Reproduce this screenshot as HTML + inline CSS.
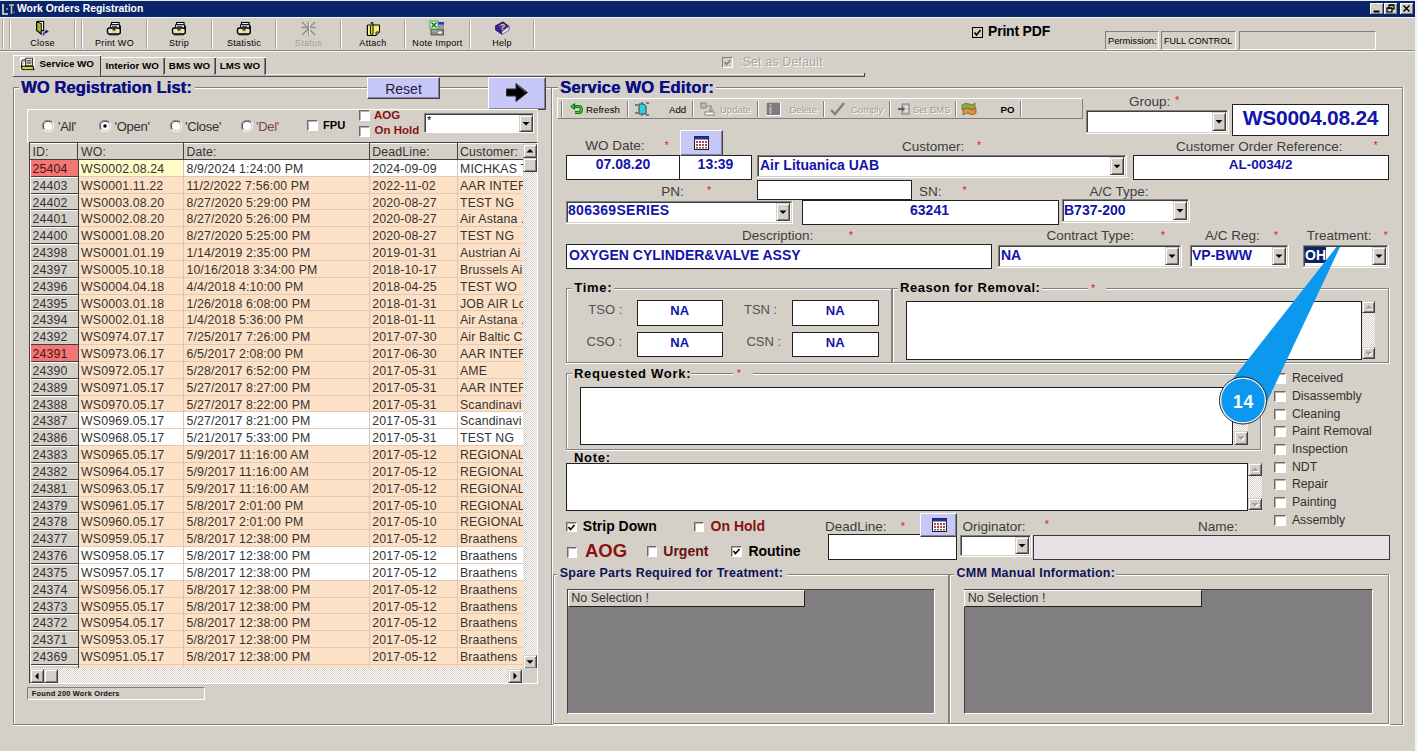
<!DOCTYPE html>
<html><head><meta charset="utf-8"><style>
html,body{margin:0;padding:0}
body{width:1417px;height:751px;overflow:hidden;position:relative;background:#d4d0c8;font-family:"Liberation Sans",sans-serif}
body div{position:absolute}
.t{white-space:nowrap}
</style></head><body>
<div style="left:0px;top:0px;width:1417px;height:1px;background:#e8e8f0"></div>
<div style="left:0px;top:1px;width:1415px;height:16px;background:#0a246a"></div>
<div style="left:1415px;top:0px;width:2px;height:751px;background:#eef0fa"></div>
<svg style="position:absolute;left:1px;top:2px" width="14" height="14" viewBox="0 0 14 14"><path d="M2 2v10h5" stroke="#e8e8d0" stroke-width="1.6" fill="none"/><path d="M8 3h5M10.5 3v9" stroke="#c8c890" stroke-width="1.6" fill="none"/><circle cx="6" cy="7" r="0.8" fill="#fff"/><circle cx="13" cy="10" r="0.6" fill="#fff"/></svg>
<div class="t" style="left:17px;top:3.90px;font-size:10.4px;line-height:10.4px;color:#fff;font-weight:bold;">Work Orders Registration</div>
<div style="left:1370px;top:3px;width:13px;height:11px;background:#d4d0c8;border-top:1px solid #fff;border-left:1px solid #fff;box-shadow:inset -1px -1px #808080;box-sizing:border-box"></div>
<div style="left:1384px;top:3px;width:13px;height:11px;background:#d4d0c8;border-top:1px solid #fff;border-left:1px solid #fff;box-shadow:inset -1px -1px #808080;box-sizing:border-box"></div>
<div style="left:1400px;top:3px;width:13px;height:11px;background:#d4d0c8;border-top:1px solid #fff;border-left:1px solid #fff;box-shadow:inset -1px -1px #808080;box-sizing:border-box"></div>
<svg style="position:absolute;left:1370px;top:3px" width="13" height="11"><rect x="3.5" y="7.5" width="6" height="2" fill="#000"/></svg>
<svg style="position:absolute;left:1384px;top:3px" width="13" height="11"><rect x="5" y="2" width="5" height="4" fill="none" stroke="#000" stroke-width="1.2"/><rect x="3" y="5" width="5" height="4" fill="#d4d0c8" stroke="#000" stroke-width="1.2"/><rect x="5" y="1.6" width="5" height="1.2" fill="#000"/><rect x="3" y="4.6" width="5" height="1.2" fill="#000"/></svg>
<svg style="position:absolute;left:1400px;top:3px" width="13" height="11"><path d="M3.5 2.5L9.5 8.5M9.5 2.5L3.5 8.5" stroke="#000" stroke-width="1.5"/></svg>
<div style="left:0px;top:17px;width:1415px;height:1px;background:#f4f4f4"></div>
<div style="left:0px;top:50px;width:1415px;height:1px;background:#8a8782"></div>
<div style="left:0px;top:51px;width:1415px;height:1px;background:#f0f0f0"></div>
<div style="left:2px;top:20px;width:1px;height:29px;background:#a8a49c"></div>
<div style="left:3px;top:20px;width:1px;height:29px;background:#fff"></div>
<div style="left:9px;top:20px;width:1px;height:29px;background:#a8a49c"></div>
<div style="left:10px;top:20px;width:1px;height:29px;background:#fff"></div>
<div style="left:74px;top:20px;width:1px;height:29px;background:#a8a49c"></div>
<div style="left:75px;top:20px;width:1px;height:29px;background:#fff"></div>
<div style="left:81px;top:20px;width:1px;height:29px;background:#a8a49c"></div>
<div style="left:82px;top:20px;width:1px;height:29px;background:#fff"></div>
<div style="left:146px;top:20px;width:1px;height:29px;background:#a8a49c"></div>
<div style="left:147px;top:20px;width:1px;height:29px;background:#fff"></div>
<div style="left:211px;top:20px;width:1px;height:29px;background:#a8a49c"></div>
<div style="left:212px;top:20px;width:1px;height:29px;background:#fff"></div>
<div style="left:275px;top:20px;width:1px;height:29px;background:#a8a49c"></div>
<div style="left:276px;top:20px;width:1px;height:29px;background:#fff"></div>
<div style="left:340px;top:20px;width:1px;height:29px;background:#a8a49c"></div>
<div style="left:341px;top:20px;width:1px;height:29px;background:#fff"></div>
<div style="left:404px;top:20px;width:1px;height:29px;background:#a8a49c"></div>
<div style="left:405px;top:20px;width:1px;height:29px;background:#fff"></div>
<div style="left:469px;top:20px;width:1px;height:29px;background:#a8a49c"></div>
<div style="left:470px;top:20px;width:1px;height:29px;background:#fff"></div>
<div style="left:533px;top:20px;width:1px;height:29px;background:#a8a49c"></div>
<div style="left:534px;top:20px;width:1px;height:29px;background:#fff"></div>
<div class="t" style="left:-257.5px;width:600px;text-align:center;top:38.58px;font-size:9px;line-height:9px;color:#000;letter-spacing:0.3px">Close</div>
<div class="t" style="left:-185.5px;width:600px;text-align:center;top:38.58px;font-size:9px;line-height:9px;color:#000;letter-spacing:0.3px">Print WO</div>
<div class="t" style="left:-121px;width:600px;text-align:center;top:38.58px;font-size:9px;line-height:9px;color:#000;letter-spacing:0.3px">Strip</div>
<div class="t" style="left:-56px;width:600px;text-align:center;top:38.58px;font-size:9px;line-height:9px;color:#000;letter-spacing:0.3px">Statistic</div>
<div class="t" style="left:8.5px;width:600px;text-align:center;top:38.58px;font-size:9px;line-height:9px;color:#a09c94;letter-spacing:0.3px">Status</div>
<div class="t" style="left:73px;width:600px;text-align:center;top:38.58px;font-size:9px;line-height:9px;color:#000;letter-spacing:0.3px">Attach</div>
<div class="t" style="left:137.5px;width:600px;text-align:center;top:38.58px;font-size:9px;line-height:9px;color:#000;letter-spacing:0.3px">Note Import</div>
<div class="t" style="left:202px;width:600px;text-align:center;top:38.58px;font-size:9px;line-height:9px;color:#000;letter-spacing:0.3px">Help</div>
<svg style="position:absolute;left:106.0px;top:21px" width="16" height="15" viewBox="0 0 16 15"><rect x="2.8" y="12.6" width="10" height="2" fill="#707070"/><rect x="12.6" y="4.5" width="2.3" height="7.5" fill="#000"/><rect x="5.5" y="1.5" width="7.5" height="2.2" fill="#fff" stroke="#000" stroke-width="1.1"/><rect x="4.5" y="3.8" width="9" height="3.5" fill="#f0f0f0" stroke="#000" stroke-width="0.9"/><line x1="6" y1="5.5" x2="11" y2="5.5" stroke="#404040" stroke-width="0.9"/><rect x="1.5" y="7" width="12.8" height="6" rx="2" fill="#e6e6de" stroke="#000" stroke-width="1.4"/><rect x="6.6" y="9.4" width="3.8" height="2.4" fill="#d8ec30"/><rect x="6.5" y="8.2" width="3" height="1.2" fill="#000"/></svg>
<svg style="position:absolute;left:170.5px;top:21px" width="16" height="15" viewBox="0 0 16 15"><rect x="2.8" y="12.6" width="10" height="2" fill="#707070"/><rect x="12.6" y="4.5" width="2.3" height="7.5" fill="#000"/><rect x="5.5" y="1.5" width="7.5" height="2.2" fill="#fff" stroke="#000" stroke-width="1.1"/><rect x="4.5" y="3.8" width="9" height="3.5" fill="#f0f0f0" stroke="#000" stroke-width="0.9"/><line x1="6" y1="5.5" x2="11" y2="5.5" stroke="#404040" stroke-width="0.9"/><rect x="1.5" y="7" width="12.8" height="6" rx="2" fill="#e6e6de" stroke="#000" stroke-width="1.4"/><rect x="6.6" y="9.4" width="3.8" height="2.4" fill="#d8ec30"/><rect x="6.5" y="8.2" width="3" height="1.2" fill="#000"/></svg>
<svg style="position:absolute;left:235.5px;top:21px" width="16" height="15" viewBox="0 0 16 15"><rect x="2.8" y="12.6" width="10" height="2" fill="#707070"/><rect x="12.6" y="4.5" width="2.3" height="7.5" fill="#000"/><rect x="5.5" y="1.5" width="7.5" height="2.2" fill="#fff" stroke="#000" stroke-width="1.1"/><rect x="4.5" y="3.8" width="9" height="3.5" fill="#f0f0f0" stroke="#000" stroke-width="0.9"/><line x1="6" y1="5.5" x2="11" y2="5.5" stroke="#404040" stroke-width="0.9"/><rect x="1.5" y="7" width="12.8" height="6" rx="2" fill="#e6e6de" stroke="#000" stroke-width="1.4"/><rect x="6.6" y="9.4" width="3.8" height="2.4" fill="#d8ec30"/><rect x="6.5" y="8.2" width="3" height="1.2" fill="#000"/></svg>
<svg style="position:absolute;left:35px;top:20px" width="15" height="17" viewBox="0 0 15 17"><rect x="2.6" y="1.4" width="6" height="9.2" fill="#fff" stroke="#000" stroke-width="1.1"/><path d="M1.6 2 L6.2 3.6 V14.2 L1.6 10.4 Z" fill="#a0a820" stroke="#000" stroke-width="1.1"/><path d="M2.6 3.5 L5 4.4 V11" stroke="#d0d060" stroke-width="0.8" fill="none"/><path d="M8.4 15.4 Q8.8 12 11.6 11.6" stroke="#3838a8" stroke-width="1.6" fill="none"/><path d="M10.6 9.4 L13.8 11.4 L10.6 13.4 Z" fill="#18186a"/></svg>
<svg style="position:absolute;left:300px;top:20px" width="17" height="17" viewBox="0 0 17 17"><g stroke="#8c8a84" stroke-width="1.3"><line x1="8.5" y1="1.5" x2="8.5" y2="15.5"/><line x1="2" y1="2" x2="15" y2="15"/><line x1="15" y1="2" x2="2" y2="15"/><line x1="1" y1="7.5" x2="16" y2="7.5"/></g><line x1="9.6" y1="2" x2="9.6" y2="15" stroke="#fff" stroke-width="0.8"/></svg>
<svg style="position:absolute;left:365px;top:21px" width="16" height="16" viewBox="0 0 16 16"><rect x="1.5" y="4" width="2.5" height="10.5" fill="#707058"/><path d="M2.5 4 H14.5 V10.5 L11 14.5 H2.5 Z" fill="#f4f070" stroke="#000" stroke-width="1"/><path d="M11 14.5 V11 H14.5 Z" fill="#c8c850" stroke="#000" stroke-width="0.8"/><path d="M6 3 Q6 1.2 7 1.2 Q8 1.2 8 3 V12 Q8 14 6.8 14 Q5.6 14 5.6 12 V5" stroke="#000" stroke-width="1" fill="none"/></svg>
<svg style="position:absolute;left:429px;top:20px" width="17" height="16" viewBox="0 0 17 16"><rect x="2" y="9" width="12.5" height="6" fill="#8c8c8c" stroke="#505050" stroke-width="0.9"/><rect x="3.5" y="10.5" width="4" height="1" fill="#c0c0c0"/><rect x="9" y="11.5" width="4" height="2" rx="1" fill="#fff"/><rect x="9" y="3" width="6" height="6" fill="#9c9c9c"/><rect x="9" y="2" width="6" height="2.5" fill="#2040d0"/><rect x="1" y="1" width="8" height="8" fill="#f0f8f0" stroke="#40a040" stroke-width="1"/><path d="M2.5 2.5 L7.5 7.5 M7.5 2.5 L2.5 7.5" stroke="#108010" stroke-width="1.6"/></svg>
<svg style="position:absolute;left:494px;top:21px" width="16" height="15" viewBox="0 0 16 15"><path d="M1.5 5 L9 1 L15 5.5 L15 9 L8 13.5 L1.5 9 Z" fill="#fff" stroke="#20105a" stroke-width="0.8"/><path d="M1.5 5 L9 1 L15 5.5 L8 10.5 Z" fill="#4a28b0" stroke="#20105a" stroke-width="1"/><path d="M1.5 5 L8 10.5 V13.5 L1.5 9 Z" fill="#3a1890"/><path d="M8 10.5 L15 5.5 V9 L8 13.5 Z" fill="#e8e8f0" stroke="#606080" stroke-width="0.5"/><text x="8.5" y="8.6" font-family="Liberation Sans" font-weight="bold" font-size="9" fill="#f8e010" text-anchor="middle">?</text></svg>
<div style="left:972px;top:27px;width:11px;height:11px;border:1.5px solid #000;box-sizing:border-box;background:#d4d0c8"></div>
<svg style="position:absolute;left:972px;top:27px" width="11" height="11"><path d="M2.5 5.5 L4.5 8 L8.5 3" stroke="#000" stroke-width="1.6" fill="none"/></svg>
<div class="t" style="left:988px;top:24.15px;font-size:14px;line-height:14px;color:#000;font-weight:bold;letter-spacing:-0.2px">Print PDF</div>
<div style="left:1105px;top:31px;width:54px;height:19px;border-top:1px solid #808080;border-left:1px solid #808080;border-right:1px solid #fff;border-bottom:1px solid #fff;box-sizing:border-box"></div>
<div style="left:1161px;top:31px;width:75px;height:19px;border-top:1px solid #808080;border-left:1px solid #808080;border-right:1px solid #fff;border-bottom:1px solid #fff;box-sizing:border-box"></div>
<div style="left:1239px;top:31px;width:137px;height:19px;border-top:1px solid #808080;border-left:1px solid #808080;border-right:1px solid #fff;border-bottom:1px solid #fff;box-sizing:border-box"></div>
<div class="t" style="left:1108px;top:36.93px;font-size:9.3px;line-height:9.3px;color:#000;">Permission:</div>
<div class="t" style="left:1164px;top:37.18px;font-size:9px;line-height:9px;color:#000;">FULL CONTROL</div>
<div style="left:13px;top:74px;width:852px;height:1px;background:#f0f0f0"></div>
<div style="left:13px;top:75px;width:852px;height:1px;background:#b8b6b0"></div>
<div style="left:13px;top:76px;width:852px;height:1px;background:#505050"></div>
<div style="left:864px;top:73px;width:1px;height:4px;background:#404040"></div>
<div style="left:13px;top:55px;width:88px;height:21px;border-top:1px solid #fff;border-left:1px solid #fff;box-shadow:inset -1px 0 #808080;box-sizing:border-box;background:#d4d0c8"></div>
<div style="left:100px;top:56px;width:1px;height:20px;background:#404040"></div>
<div style="left:102px;top:57px;width:62.5px;height:18px;border-top:1px solid #fff;box-sizing:border-box;background:#d4d0c8"></div>
<div style="left:163.5px;top:58px;width:1px;height:16px;background:#404040"></div>
<div style="left:162.5px;top:58px;width:1px;height:17px;background:#808080"></div>
<div class="t" style="left:-167.75px;width:600px;text-align:center;top:60.70px;font-size:9.8px;line-height:9.8px;color:#000;font-weight:bold;">Interior WO</div>
<div style="left:165.5px;top:57px;width:50.0px;height:18px;border-top:1px solid #fff;box-sizing:border-box;background:#d4d0c8"></div>
<div style="left:214.5px;top:58px;width:1px;height:16px;background:#404040"></div>
<div style="left:213.5px;top:58px;width:1px;height:17px;background:#808080"></div>
<div class="t" style="left:-110.5px;width:600px;text-align:center;top:60.70px;font-size:9.8px;line-height:9.8px;color:#000;font-weight:bold;">BMS WO</div>
<div style="left:216.5px;top:57px;width:49.0px;height:18px;border-top:1px solid #fff;box-sizing:border-box;background:#d4d0c8"></div>
<div style="left:264.5px;top:58px;width:1px;height:16px;background:#404040"></div>
<div style="left:263.5px;top:58px;width:1px;height:17px;background:#808080"></div>
<div class="t" style="left:-60.0px;width:600px;text-align:center;top:60.70px;font-size:9.8px;line-height:9.8px;color:#000;font-weight:bold;">LMS WO</div>
<div class="t" style="left:39.5px;top:58.90px;font-size:9.8px;line-height:9.8px;color:#000;font-weight:bold;">Service WO</div>
<svg style="position:absolute;left:20px;top:57px" width="15" height="14" viewBox="0 0 15 14"><rect x="0" y="0" width="14.7" height="14" fill="#fcfcf4"/><path d="M1.6 10 V4.6 Q1.6 2.9 3.2 2.9 H6" stroke="#202020" stroke-width="1" fill="#c8ccb0"/><rect x="5.6" y="1.2" width="7" height="7.6" fill="#e0e4d8" stroke="#202020" stroke-width="0.9"/><line x1="6.6" y1="3.9" x2="11.4" y2="3.9" stroke="#181838" stroke-width="1"/><line x1="6.6" y1="6" x2="11.4" y2="6" stroke="#181838" stroke-width="1"/><path d="M1.2 9.2 H13 L14 12.8 H2.2 Z" fill="#c8dc30" stroke="#000" stroke-width="1.1"/></svg>
<div style="left:722px;top:57px;width:11px;height:11px;border-top:1px solid #808080;border-left:1px solid #808080;border-right:1px solid #fff;border-bottom:1px solid #fff;box-sizing:border-box;background:#d4d0c8"></div>
<svg style="position:absolute;left:722px;top:57px" width="11" height="11"><path d="M2.5 5 L4.5 7.5 L8.5 3" stroke="#808080" stroke-width="1.6" fill="none"/></svg>
<div class="t" style="left:739px;top:56.34px;font-size:12px;line-height:12px;color:#a8a49c;text-shadow:1px 1px #fff;letter-spacing:0.35px">:Set as Default</div>
<div style="left:13px;top:87px;width:540px;height:1px;background:#808080"></div>
<div style="left:14px;top:88px;width:539px;height:1px;background:#fff"></div>
<div style="left:13px;top:87px;width:1px;height:638px;background:#808080"></div>
<div style="left:14px;top:88px;width:1px;height:636px;background:#fff"></div>
<div style="left:13px;top:724px;width:540px;height:1px;background:#808080"></div>
<div style="left:13px;top:725px;width:540px;height:1px;background:#fff"></div>
<div style="left:19px;top:78px;width:176px;height:18px;background:#d4d0c8"></div>
<div class="t" style="left:21px;top:79.03px;font-size:16.5px;line-height:16.5px;color:#0c0e86;font-weight:bold;letter-spacing:0.1px;text-shadow:0.4px 0 0 #0c0e86">WO Registration List:</div>
<div style="left:367px;top:77px;width:73px;height:22px;background:#c8c8f8;border-top:1px solid #fff;border-left:1px solid #fff;border-right:1px solid #404040;border-bottom:1px solid #404040;box-sizing:border-box;box-shadow:inset -1px -1px #8080a0"></div>
<div class="t" style="left:103.5px;width:600px;text-align:center;top:81.75px;font-size:14px;line-height:14px;color:#20203a;">Reset</div>
<div style="left:488px;top:77px;width:58px;height:33px;background:#c8c8f8;border-top:1px solid #fff;border-left:1px solid #fff;border-right:1px solid #404040;border-bottom:1px solid #404040;box-sizing:border-box;box-shadow:inset -1px -1px #8080a0"></div>
<svg style="position:absolute;left:505px;top:82px" width="24" height="21" viewBox="0 0 24 21"><path d="M1.5 7 H11 V1.5 L22.5 10.5 L11 19.5 V14 H1.5 Z" fill="#000" stroke="#303030" stroke-width="1"/><path d="M12 3 L21 10.5" stroke="#606060" stroke-width="1"/></svg>
<div style="left:27px;top:109px;width:511px;height:34px;border-top:1px solid #fff;border-left:1px solid #fff;border-right:1px solid #f4f4f4;box-sizing:border-box"></div>
<svg style="position:absolute;left:42px;top:120px" width="12" height="12" viewBox="0 0 12 12"><path d="M10.5 2.2 A5.5 5.5 0 0 0 1.5 9.8" stroke="#808080" fill="none"/><path d="M9.6 3 A4.5 4.5 0 0 0 2.4 9" stroke="#404040" fill="none"/><path d="M1.5 9.8 A5.5 5.5 0 0 0 10.5 2.2" stroke="#fff" fill="none"/><circle cx="6" cy="6" r="4" fill="#fff"/></svg>
<div class="t" style="left:58px;top:119.80px;font-size:13px;line-height:13px;color:#303030;letter-spacing:-0.3px">&#x27;All&#x27;</div>
<svg style="position:absolute;left:99px;top:120px" width="12" height="12" viewBox="0 0 12 12"><path d="M10.5 2.2 A5.5 5.5 0 0 0 1.5 9.8" stroke="#808080" fill="none"/><path d="M9.6 3 A4.5 4.5 0 0 0 2.4 9" stroke="#404040" fill="none"/><path d="M1.5 9.8 A5.5 5.5 0 0 0 10.5 2.2" stroke="#fff" fill="none"/><circle cx="6" cy="6" r="4" fill="#fff"/><circle cx='6' cy='6' r='1.8' fill='#000'/></svg>
<div class="t" style="left:114.6px;top:119.80px;font-size:13px;line-height:13px;color:#303030;letter-spacing:-0.3px">&#x27;Open&#x27;</div>
<svg style="position:absolute;left:169.5px;top:120px" width="12" height="12" viewBox="0 0 12 12"><path d="M10.5 2.2 A5.5 5.5 0 0 0 1.5 9.8" stroke="#808080" fill="none"/><path d="M9.6 3 A4.5 4.5 0 0 0 2.4 9" stroke="#404040" fill="none"/><path d="M1.5 9.8 A5.5 5.5 0 0 0 10.5 2.2" stroke="#fff" fill="none"/><circle cx="6" cy="6" r="4" fill="#fff"/></svg>
<div class="t" style="left:185px;top:119.80px;font-size:13px;line-height:13px;color:#303030;letter-spacing:-0.3px">&#x27;Close&#x27;</div>
<svg style="position:absolute;left:240.5px;top:120px" width="12" height="12" viewBox="0 0 12 12"><path d="M10.5 2.2 A5.5 5.5 0 0 0 1.5 9.8" stroke="#808080" fill="none"/><path d="M9.6 3 A4.5 4.5 0 0 0 2.4 9" stroke="#404040" fill="none"/><path d="M1.5 9.8 A5.5 5.5 0 0 0 10.5 2.2" stroke="#fff" fill="none"/><circle cx="6" cy="6" r="4" fill="#fff"/></svg>
<div class="t" style="left:256px;top:119.80px;font-size:13px;line-height:13px;color:#804848;letter-spacing:-0.3px">&#x27;Del&#x27;</div>
<div style="left:307px;top:120px;width:11px;height:11px;background:#fff;border-top:1px solid #6a6a6a;border-left:1px solid #6a6a6a;border-right:1px solid #fff;border-bottom:1px solid #fff;box-sizing:border-box;box-shadow:inset 1px 1px #b8b4ac"></div>
<div class="t" style="left:323px;top:120.02px;font-size:11.2px;line-height:11.2px;color:#000;font-weight:bold;">FPU</div>
<div style="left:358.5px;top:109.5px;width:11px;height:11px;background:#fff;border-top:1px solid #6a6a6a;border-left:1px solid #6a6a6a;border-right:1px solid #fff;border-bottom:1px solid #fff;box-sizing:border-box;box-shadow:inset 1px 1px #b8b4ac"></div>
<div class="t" style="left:374px;top:109.67px;font-size:11.5px;line-height:11.5px;color:#8b1010;font-weight:bold;">AOG</div>
<div style="left:358.5px;top:126px;width:11px;height:11px;background:#fff;border-top:1px solid #6a6a6a;border-left:1px solid #6a6a6a;border-right:1px solid #fff;border-bottom:1px solid #fff;box-sizing:border-box;box-shadow:inset 1px 1px #b8b4ac"></div>
<div class="t" style="left:374.5px;top:125.37px;font-size:11.5px;line-height:11.5px;color:#8b1010;font-weight:bold;">On Hold</div>
<div style="left:424px;top:113px;width:110px;height:20px;background:#fff;border-top:1px solid #808080;border-left:1px solid #808080;border-right:1px solid #fff;border-bottom:1px solid #fff;box-sizing:border-box;box-shadow:inset 1px 1px #404040"></div>
<div class="t" style="left:427px;top:114.69px;font-size:11px;line-height:11px;color:#000;">*</div>
<div style="left:519px;top:115px;width:14px;height:17px;background:#d4d0c8;border-top:1px solid #d4d0c8;border-left:1px solid #d4d0c8;border-right:1px solid #404040;border-bottom:1px solid #404040;box-sizing:border-box;box-shadow:inset 1px 1px #fff,inset -1px -1px #808080"></div>
<svg style="position:absolute;left:519px;top:115px" width="14" height="17"><path d="M3.5 7.0 H10.5 L7.0 10.5 Z" fill="#000"/></svg>
<div style="left:29px;top:142px;width:509px;height:542px;border-top:1px solid #404040;border-left:1px solid #404040;border-right:1px solid #fff;border-bottom:1px solid #fff;box-sizing:border-box"></div>
<div style="left:30px;top:143px;width:492.5px;height:17px;background:#d4d0c8"></div>
<div style="left:30px;top:159px;width:492.5px;height:1px;background:#404040"></div>
<div style="left:30px;top:143px;width:492.5px;height:1px;background:#fff"></div>
<div style="left:77px;top:143px;width:1px;height:16px;background:#404040"></div>
<div class="t" style="left:32.5px;top:145.79px;font-size:12.3px;line-height:12.3px;color:#333;letter-spacing:0.15px">ID:</div>
<div style="left:182.7px;top:143px;width:1px;height:16px;background:#404040"></div>
<div class="t" style="left:81.1px;top:145.79px;font-size:12.3px;line-height:12.3px;color:#333;letter-spacing:0.15px">WO:</div>
<div style="left:368.7px;top:143px;width:1px;height:16px;background:#404040"></div>
<div class="t" style="left:186.4px;top:145.79px;font-size:12.3px;line-height:12.3px;color:#333;letter-spacing:0.15px">Date:</div>
<div style="left:457px;top:143px;width:1px;height:16px;background:#404040"></div>
<div class="t" style="left:372.3px;top:145.79px;font-size:12.3px;line-height:12.3px;color:#333;letter-spacing:0.15px">DeadLine:</div>
<div class="t" style="left:460.0px;top:145.79px;font-size:12.3px;line-height:12.3px;color:#333;letter-spacing:0.15px">Customer:</div>
<div style="left:30px;top:160px;width:492.5px;height:508px;overflow:hidden">
<div style="left:0;top:0.00px;width:493px;height:17.33px;background:#fff"></div>
<div style="left:0;top:0.00px;width:48px;height:17.33px;background:#f47676"></div>
<div style="left:0;top:15.83px;width:48px;height:1px;background:#404040"></div>
<div style="left:48px;top:0;width:105.7px;height:16.83px;background:#fefcc8"></div>
<div style="left:48px;top:15.83px;width:445px;height:1px;background:#e2cab6"></div>
<div class="t" style="left:2.5000000000000036px;top:2.99px;font-size:12.3px;line-height:12.3px;color:#4a1414;letter-spacing:0.15px">25404</div>
<div class="t" style="left:51.099999999999994px;top:2.99px;font-size:12.3px;line-height:12.3px;color:#333;letter-spacing:0.15px">WS0002.08.24</div>
<div class="t" style="left:156.4px;top:2.99px;font-size:12.3px;line-height:12.3px;color:#333;letter-spacing:0.15px">8/9/2024 1:24:00 PM</div>
<div class="t" style="left:342.3px;top:2.99px;font-size:12.3px;line-height:12.3px;color:#333;letter-spacing:0.15px">2024-09-09</div>
<div class="t" style="left:430.0px;top:2.99px;font-size:12.3px;line-height:12.3px;color:#333;letter-spacing:0.15px">MICHKAS T</div>
<div style="left:0;top:16.83px;width:493px;height:17.33px;background:#fde1c6"></div>
<div style="left:0;top:16.83px;width:48px;height:17.33px;background:#d4d0c8"></div>
<div style="left:0;top:32.66px;width:48px;height:1px;background:#404040"></div>
<div style="left:1px;top:16.83px;width:47px;height:1px;background:#fff"></div>
<div style="left:48px;top:32.66px;width:445px;height:1px;background:#e2cab6"></div>
<div class="t" style="left:2.5000000000000036px;top:19.82px;font-size:12.3px;line-height:12.3px;color:#333;letter-spacing:0.15px">24403</div>
<div class="t" style="left:51.099999999999994px;top:19.82px;font-size:12.3px;line-height:12.3px;color:#333;letter-spacing:0.15px">WS0001.11.22</div>
<div class="t" style="left:156.4px;top:19.82px;font-size:12.3px;line-height:12.3px;color:#333;letter-spacing:0.15px">11/2/2022 7:56:00 PM</div>
<div class="t" style="left:342.3px;top:19.82px;font-size:12.3px;line-height:12.3px;color:#333;letter-spacing:0.15px">2022-11-02</div>
<div class="t" style="left:430.0px;top:19.82px;font-size:12.3px;line-height:12.3px;color:#333;letter-spacing:0.15px">AAR INTER</div>
<div style="left:0;top:33.66px;width:493px;height:17.33px;background:#fde1c6"></div>
<div style="left:0;top:33.66px;width:48px;height:17.33px;background:#d4d0c8"></div>
<div style="left:0;top:49.49px;width:48px;height:1px;background:#404040"></div>
<div style="left:1px;top:33.66px;width:47px;height:1px;background:#fff"></div>
<div style="left:48px;top:49.49px;width:445px;height:1px;background:#e2cab6"></div>
<div class="t" style="left:2.5000000000000036px;top:36.65px;font-size:12.3px;line-height:12.3px;color:#333;letter-spacing:0.15px">24402</div>
<div class="t" style="left:51.099999999999994px;top:36.65px;font-size:12.3px;line-height:12.3px;color:#333;letter-spacing:0.15px">WS0003.08.20</div>
<div class="t" style="left:156.4px;top:36.65px;font-size:12.3px;line-height:12.3px;color:#333;letter-spacing:0.15px">8/27/2020 5:29:00 PM</div>
<div class="t" style="left:342.3px;top:36.65px;font-size:12.3px;line-height:12.3px;color:#333;letter-spacing:0.15px">2020-08-27</div>
<div class="t" style="left:430.0px;top:36.65px;font-size:12.3px;line-height:12.3px;color:#333;letter-spacing:0.15px">TEST NG</div>
<div style="left:0;top:50.49px;width:493px;height:17.33px;background:#fde1c6"></div>
<div style="left:0;top:50.49px;width:48px;height:17.33px;background:#d4d0c8"></div>
<div style="left:0;top:66.32px;width:48px;height:1px;background:#404040"></div>
<div style="left:1px;top:50.49px;width:47px;height:1px;background:#fff"></div>
<div style="left:48px;top:66.32px;width:445px;height:1px;background:#e2cab6"></div>
<div class="t" style="left:2.5000000000000036px;top:53.48px;font-size:12.3px;line-height:12.3px;color:#333;letter-spacing:0.15px">24401</div>
<div class="t" style="left:51.099999999999994px;top:53.48px;font-size:12.3px;line-height:12.3px;color:#333;letter-spacing:0.15px">WS0002.08.20</div>
<div class="t" style="left:156.4px;top:53.48px;font-size:12.3px;line-height:12.3px;color:#333;letter-spacing:0.15px">8/27/2020 5:26:00 PM</div>
<div class="t" style="left:342.3px;top:53.48px;font-size:12.3px;line-height:12.3px;color:#333;letter-spacing:0.15px">2020-08-27</div>
<div class="t" style="left:430.0px;top:53.48px;font-size:12.3px;line-height:12.3px;color:#333;letter-spacing:0.15px">Air Astana .</div>
<div style="left:0;top:67.32px;width:493px;height:17.33px;background:#fde1c6"></div>
<div style="left:0;top:67.32px;width:48px;height:17.33px;background:#d4d0c8"></div>
<div style="left:0;top:83.15px;width:48px;height:1px;background:#404040"></div>
<div style="left:1px;top:67.32px;width:47px;height:1px;background:#fff"></div>
<div style="left:48px;top:83.15px;width:445px;height:1px;background:#e2cab6"></div>
<div class="t" style="left:2.5000000000000036px;top:70.31px;font-size:12.3px;line-height:12.3px;color:#333;letter-spacing:0.15px">24400</div>
<div class="t" style="left:51.099999999999994px;top:70.31px;font-size:12.3px;line-height:12.3px;color:#333;letter-spacing:0.15px">WS0001.08.20</div>
<div class="t" style="left:156.4px;top:70.31px;font-size:12.3px;line-height:12.3px;color:#333;letter-spacing:0.15px">8/27/2020 5:25:00 PM</div>
<div class="t" style="left:342.3px;top:70.31px;font-size:12.3px;line-height:12.3px;color:#333;letter-spacing:0.15px">2020-08-27</div>
<div class="t" style="left:430.0px;top:70.31px;font-size:12.3px;line-height:12.3px;color:#333;letter-spacing:0.15px">TEST NG</div>
<div style="left:0;top:84.15px;width:493px;height:17.33px;background:#fde1c6"></div>
<div style="left:0;top:84.15px;width:48px;height:17.33px;background:#d4d0c8"></div>
<div style="left:0;top:99.98px;width:48px;height:1px;background:#404040"></div>
<div style="left:1px;top:84.15px;width:47px;height:1px;background:#fff"></div>
<div style="left:48px;top:99.98px;width:445px;height:1px;background:#e2cab6"></div>
<div class="t" style="left:2.5000000000000036px;top:87.14px;font-size:12.3px;line-height:12.3px;color:#333;letter-spacing:0.15px">24398</div>
<div class="t" style="left:51.099999999999994px;top:87.14px;font-size:12.3px;line-height:12.3px;color:#333;letter-spacing:0.15px">WS0001.01.19</div>
<div class="t" style="left:156.4px;top:87.14px;font-size:12.3px;line-height:12.3px;color:#333;letter-spacing:0.15px">1/14/2019 2:35:00 PM</div>
<div class="t" style="left:342.3px;top:87.14px;font-size:12.3px;line-height:12.3px;color:#333;letter-spacing:0.15px">2019-01-31</div>
<div class="t" style="left:430.0px;top:87.14px;font-size:12.3px;line-height:12.3px;color:#333;letter-spacing:0.15px">Austrian Ai</div>
<div style="left:0;top:100.98px;width:493px;height:17.33px;background:#fde1c6"></div>
<div style="left:0;top:100.98px;width:48px;height:17.33px;background:#d4d0c8"></div>
<div style="left:0;top:116.81px;width:48px;height:1px;background:#404040"></div>
<div style="left:1px;top:100.98px;width:47px;height:1px;background:#fff"></div>
<div style="left:48px;top:116.81px;width:445px;height:1px;background:#e2cab6"></div>
<div class="t" style="left:2.5000000000000036px;top:103.97px;font-size:12.3px;line-height:12.3px;color:#333;letter-spacing:0.15px">24397</div>
<div class="t" style="left:51.099999999999994px;top:103.97px;font-size:12.3px;line-height:12.3px;color:#333;letter-spacing:0.15px">WS0005.10.18</div>
<div class="t" style="left:156.4px;top:103.97px;font-size:12.3px;line-height:12.3px;color:#333;letter-spacing:0.15px">10/16/2018 3:34:00 PM</div>
<div class="t" style="left:342.3px;top:103.97px;font-size:12.3px;line-height:12.3px;color:#333;letter-spacing:0.15px">2018-10-17</div>
<div class="t" style="left:430.0px;top:103.97px;font-size:12.3px;line-height:12.3px;color:#333;letter-spacing:0.15px">Brussels Ai</div>
<div style="left:0;top:117.81px;width:493px;height:17.33px;background:#fde1c6"></div>
<div style="left:0;top:117.81px;width:48px;height:17.33px;background:#d4d0c8"></div>
<div style="left:0;top:133.64px;width:48px;height:1px;background:#404040"></div>
<div style="left:1px;top:117.81px;width:47px;height:1px;background:#fff"></div>
<div style="left:48px;top:133.64px;width:445px;height:1px;background:#e2cab6"></div>
<div class="t" style="left:2.5000000000000036px;top:120.80px;font-size:12.3px;line-height:12.3px;color:#333;letter-spacing:0.15px">24396</div>
<div class="t" style="left:51.099999999999994px;top:120.80px;font-size:12.3px;line-height:12.3px;color:#333;letter-spacing:0.15px">WS0004.04.18</div>
<div class="t" style="left:156.4px;top:120.80px;font-size:12.3px;line-height:12.3px;color:#333;letter-spacing:0.15px">4/4/2018 4:10:00 PM</div>
<div class="t" style="left:342.3px;top:120.80px;font-size:12.3px;line-height:12.3px;color:#333;letter-spacing:0.15px">2018-04-25</div>
<div class="t" style="left:430.0px;top:120.80px;font-size:12.3px;line-height:12.3px;color:#333;letter-spacing:0.15px">TEST WO</div>
<div style="left:0;top:134.64px;width:493px;height:17.33px;background:#fde1c6"></div>
<div style="left:0;top:134.64px;width:48px;height:17.33px;background:#d4d0c8"></div>
<div style="left:0;top:150.47px;width:48px;height:1px;background:#404040"></div>
<div style="left:1px;top:134.64px;width:47px;height:1px;background:#fff"></div>
<div style="left:48px;top:150.47px;width:445px;height:1px;background:#e2cab6"></div>
<div class="t" style="left:2.5000000000000036px;top:137.63px;font-size:12.3px;line-height:12.3px;color:#333;letter-spacing:0.15px">24395</div>
<div class="t" style="left:51.099999999999994px;top:137.63px;font-size:12.3px;line-height:12.3px;color:#333;letter-spacing:0.15px">WS0003.01.18</div>
<div class="t" style="left:156.4px;top:137.63px;font-size:12.3px;line-height:12.3px;color:#333;letter-spacing:0.15px">1/26/2018 6:08:00 PM</div>
<div class="t" style="left:342.3px;top:137.63px;font-size:12.3px;line-height:12.3px;color:#333;letter-spacing:0.15px">2018-01-31</div>
<div class="t" style="left:430.0px;top:137.63px;font-size:12.3px;line-height:12.3px;color:#333;letter-spacing:0.15px">JOB AIR Lc</div>
<div style="left:0;top:151.47px;width:493px;height:17.33px;background:#fde1c6"></div>
<div style="left:0;top:151.47px;width:48px;height:17.33px;background:#d4d0c8"></div>
<div style="left:0;top:167.30px;width:48px;height:1px;background:#404040"></div>
<div style="left:1px;top:151.47px;width:47px;height:1px;background:#fff"></div>
<div style="left:48px;top:167.30px;width:445px;height:1px;background:#e2cab6"></div>
<div class="t" style="left:2.5000000000000036px;top:154.46px;font-size:12.3px;line-height:12.3px;color:#333;letter-spacing:0.15px">24394</div>
<div class="t" style="left:51.099999999999994px;top:154.46px;font-size:12.3px;line-height:12.3px;color:#333;letter-spacing:0.15px">WS0002.01.18</div>
<div class="t" style="left:156.4px;top:154.46px;font-size:12.3px;line-height:12.3px;color:#333;letter-spacing:0.15px">1/4/2018 5:36:00 PM</div>
<div class="t" style="left:342.3px;top:154.46px;font-size:12.3px;line-height:12.3px;color:#333;letter-spacing:0.15px">2018-01-11</div>
<div class="t" style="left:430.0px;top:154.46px;font-size:12.3px;line-height:12.3px;color:#333;letter-spacing:0.15px">Air Astana .</div>
<div style="left:0;top:168.30px;width:493px;height:17.33px;background:#fde1c6"></div>
<div style="left:0;top:168.30px;width:48px;height:17.33px;background:#d4d0c8"></div>
<div style="left:0;top:184.13px;width:48px;height:1px;background:#404040"></div>
<div style="left:1px;top:168.30px;width:47px;height:1px;background:#fff"></div>
<div style="left:48px;top:184.13px;width:445px;height:1px;background:#e2cab6"></div>
<div class="t" style="left:2.5000000000000036px;top:171.29px;font-size:12.3px;line-height:12.3px;color:#333;letter-spacing:0.15px">24392</div>
<div class="t" style="left:51.099999999999994px;top:171.29px;font-size:12.3px;line-height:12.3px;color:#333;letter-spacing:0.15px">WS0974.07.17</div>
<div class="t" style="left:156.4px;top:171.29px;font-size:12.3px;line-height:12.3px;color:#333;letter-spacing:0.15px">7/25/2017 7:26:00 PM</div>
<div class="t" style="left:342.3px;top:171.29px;font-size:12.3px;line-height:12.3px;color:#333;letter-spacing:0.15px">2017-07-30</div>
<div class="t" style="left:430.0px;top:171.29px;font-size:12.3px;line-height:12.3px;color:#333;letter-spacing:0.15px">Air Baltic C</div>
<div style="left:0;top:185.13px;width:493px;height:17.33px;background:#fde1c6"></div>
<div style="left:0;top:185.13px;width:48px;height:17.33px;background:#f47676"></div>
<div style="left:0;top:200.96px;width:48px;height:1px;background:#404040"></div>
<div style="left:48px;top:200.96px;width:445px;height:1px;background:#e2cab6"></div>
<div class="t" style="left:2.5000000000000036px;top:188.12px;font-size:12.3px;line-height:12.3px;color:#4a1414;letter-spacing:0.15px">24391</div>
<div class="t" style="left:51.099999999999994px;top:188.12px;font-size:12.3px;line-height:12.3px;color:#333;letter-spacing:0.15px">WS0973.06.17</div>
<div class="t" style="left:156.4px;top:188.12px;font-size:12.3px;line-height:12.3px;color:#333;letter-spacing:0.15px">6/5/2017 2:08:00 PM</div>
<div class="t" style="left:342.3px;top:188.12px;font-size:12.3px;line-height:12.3px;color:#333;letter-spacing:0.15px">2017-06-30</div>
<div class="t" style="left:430.0px;top:188.12px;font-size:12.3px;line-height:12.3px;color:#333;letter-spacing:0.15px">AAR INTER</div>
<div style="left:0;top:201.96px;width:493px;height:17.33px;background:#fde1c6"></div>
<div style="left:0;top:201.96px;width:48px;height:17.33px;background:#d4d0c8"></div>
<div style="left:0;top:217.79px;width:48px;height:1px;background:#404040"></div>
<div style="left:1px;top:201.96px;width:47px;height:1px;background:#fff"></div>
<div style="left:48px;top:217.79px;width:445px;height:1px;background:#e2cab6"></div>
<div class="t" style="left:2.5000000000000036px;top:204.95px;font-size:12.3px;line-height:12.3px;color:#333;letter-spacing:0.15px">24390</div>
<div class="t" style="left:51.099999999999994px;top:204.95px;font-size:12.3px;line-height:12.3px;color:#333;letter-spacing:0.15px">WS0972.05.17</div>
<div class="t" style="left:156.4px;top:204.95px;font-size:12.3px;line-height:12.3px;color:#333;letter-spacing:0.15px">5/28/2017 6:52:00 PM</div>
<div class="t" style="left:342.3px;top:204.95px;font-size:12.3px;line-height:12.3px;color:#333;letter-spacing:0.15px">2017-05-31</div>
<div class="t" style="left:430.0px;top:204.95px;font-size:12.3px;line-height:12.3px;color:#333;letter-spacing:0.15px">AME</div>
<div style="left:0;top:218.79px;width:493px;height:17.33px;background:#fde1c6"></div>
<div style="left:0;top:218.79px;width:48px;height:17.33px;background:#d4d0c8"></div>
<div style="left:0;top:234.62px;width:48px;height:1px;background:#404040"></div>
<div style="left:1px;top:218.79px;width:47px;height:1px;background:#fff"></div>
<div style="left:48px;top:234.62px;width:445px;height:1px;background:#e2cab6"></div>
<div class="t" style="left:2.5000000000000036px;top:221.78px;font-size:12.3px;line-height:12.3px;color:#333;letter-spacing:0.15px">24389</div>
<div class="t" style="left:51.099999999999994px;top:221.78px;font-size:12.3px;line-height:12.3px;color:#333;letter-spacing:0.15px">WS0971.05.17</div>
<div class="t" style="left:156.4px;top:221.78px;font-size:12.3px;line-height:12.3px;color:#333;letter-spacing:0.15px">5/27/2017 8:27:00 PM</div>
<div class="t" style="left:342.3px;top:221.78px;font-size:12.3px;line-height:12.3px;color:#333;letter-spacing:0.15px">2017-05-31</div>
<div class="t" style="left:430.0px;top:221.78px;font-size:12.3px;line-height:12.3px;color:#333;letter-spacing:0.15px">AAR INTER</div>
<div style="left:0;top:235.62px;width:493px;height:17.33px;background:#fde1c6"></div>
<div style="left:0;top:235.62px;width:48px;height:17.33px;background:#d4d0c8"></div>
<div style="left:0;top:251.45px;width:48px;height:1px;background:#404040"></div>
<div style="left:1px;top:235.62px;width:47px;height:1px;background:#fff"></div>
<div style="left:48px;top:251.45px;width:445px;height:1px;background:#e2cab6"></div>
<div class="t" style="left:2.5000000000000036px;top:238.61px;font-size:12.3px;line-height:12.3px;color:#333;letter-spacing:0.15px">24388</div>
<div class="t" style="left:51.099999999999994px;top:238.61px;font-size:12.3px;line-height:12.3px;color:#333;letter-spacing:0.15px">WS0970.05.17</div>
<div class="t" style="left:156.4px;top:238.61px;font-size:12.3px;line-height:12.3px;color:#333;letter-spacing:0.15px">5/27/2017 8:22:00 PM</div>
<div class="t" style="left:342.3px;top:238.61px;font-size:12.3px;line-height:12.3px;color:#333;letter-spacing:0.15px">2017-05-31</div>
<div class="t" style="left:430.0px;top:238.61px;font-size:12.3px;line-height:12.3px;color:#333;letter-spacing:0.15px">Scandinavi</div>
<div style="left:0;top:252.45px;width:493px;height:17.33px;background:#fff"></div>
<div style="left:0;top:252.45px;width:48px;height:17.33px;background:#d4d0c8"></div>
<div style="left:0;top:268.28px;width:48px;height:1px;background:#404040"></div>
<div style="left:1px;top:252.45px;width:47px;height:1px;background:#fff"></div>
<div style="left:48px;top:268.28px;width:445px;height:1px;background:#e2cab6"></div>
<div class="t" style="left:2.5000000000000036px;top:255.44px;font-size:12.3px;line-height:12.3px;color:#333;letter-spacing:0.15px">24387</div>
<div class="t" style="left:51.099999999999994px;top:255.44px;font-size:12.3px;line-height:12.3px;color:#333;letter-spacing:0.15px">WS0969.05.17</div>
<div class="t" style="left:156.4px;top:255.44px;font-size:12.3px;line-height:12.3px;color:#333;letter-spacing:0.15px">5/27/2017 8:21:00 PM</div>
<div class="t" style="left:342.3px;top:255.44px;font-size:12.3px;line-height:12.3px;color:#333;letter-spacing:0.15px">2017-05-31</div>
<div class="t" style="left:430.0px;top:255.44px;font-size:12.3px;line-height:12.3px;color:#333;letter-spacing:0.15px">Scandinavi</div>
<div style="left:0;top:269.28px;width:493px;height:17.33px;background:#fff"></div>
<div style="left:0;top:269.28px;width:48px;height:17.33px;background:#d4d0c8"></div>
<div style="left:0;top:285.11px;width:48px;height:1px;background:#404040"></div>
<div style="left:1px;top:269.28px;width:47px;height:1px;background:#fff"></div>
<div style="left:48px;top:285.11px;width:445px;height:1px;background:#e2cab6"></div>
<div class="t" style="left:2.5000000000000036px;top:272.27px;font-size:12.3px;line-height:12.3px;color:#333;letter-spacing:0.15px">24386</div>
<div class="t" style="left:51.099999999999994px;top:272.27px;font-size:12.3px;line-height:12.3px;color:#333;letter-spacing:0.15px">WS0968.05.17</div>
<div class="t" style="left:156.4px;top:272.27px;font-size:12.3px;line-height:12.3px;color:#333;letter-spacing:0.15px">5/21/2017 5:33:00 PM</div>
<div class="t" style="left:342.3px;top:272.27px;font-size:12.3px;line-height:12.3px;color:#333;letter-spacing:0.15px">2017-05-31</div>
<div class="t" style="left:430.0px;top:272.27px;font-size:12.3px;line-height:12.3px;color:#333;letter-spacing:0.15px">TEST NG</div>
<div style="left:0;top:286.11px;width:493px;height:17.33px;background:#fde1c6"></div>
<div style="left:0;top:286.11px;width:48px;height:17.33px;background:#d4d0c8"></div>
<div style="left:0;top:301.94px;width:48px;height:1px;background:#404040"></div>
<div style="left:1px;top:286.11px;width:47px;height:1px;background:#fff"></div>
<div style="left:48px;top:301.94px;width:445px;height:1px;background:#e2cab6"></div>
<div class="t" style="left:2.5000000000000036px;top:289.10px;font-size:12.3px;line-height:12.3px;color:#333;letter-spacing:0.15px">24383</div>
<div class="t" style="left:51.099999999999994px;top:289.10px;font-size:12.3px;line-height:12.3px;color:#333;letter-spacing:0.15px">WS0965.05.17</div>
<div class="t" style="left:156.4px;top:289.10px;font-size:12.3px;line-height:12.3px;color:#333;letter-spacing:0.15px">5/9/2017 11:16:00 AM</div>
<div class="t" style="left:342.3px;top:289.10px;font-size:12.3px;line-height:12.3px;color:#333;letter-spacing:0.15px">2017-05-12</div>
<div class="t" style="left:430.0px;top:289.10px;font-size:12.3px;line-height:12.3px;color:#333;letter-spacing:0.15px">REGIONAL</div>
<div style="left:0;top:302.94px;width:493px;height:17.33px;background:#fde1c6"></div>
<div style="left:0;top:302.94px;width:48px;height:17.33px;background:#d4d0c8"></div>
<div style="left:0;top:318.77px;width:48px;height:1px;background:#404040"></div>
<div style="left:1px;top:302.94px;width:47px;height:1px;background:#fff"></div>
<div style="left:48px;top:318.77px;width:445px;height:1px;background:#e2cab6"></div>
<div class="t" style="left:2.5000000000000036px;top:305.93px;font-size:12.3px;line-height:12.3px;color:#333;letter-spacing:0.15px">24382</div>
<div class="t" style="left:51.099999999999994px;top:305.93px;font-size:12.3px;line-height:12.3px;color:#333;letter-spacing:0.15px">WS0964.05.17</div>
<div class="t" style="left:156.4px;top:305.93px;font-size:12.3px;line-height:12.3px;color:#333;letter-spacing:0.15px">5/9/2017 11:16:00 AM</div>
<div class="t" style="left:342.3px;top:305.93px;font-size:12.3px;line-height:12.3px;color:#333;letter-spacing:0.15px">2017-05-12</div>
<div class="t" style="left:430.0px;top:305.93px;font-size:12.3px;line-height:12.3px;color:#333;letter-spacing:0.15px">REGIONAL</div>
<div style="left:0;top:319.77px;width:493px;height:17.33px;background:#fde1c6"></div>
<div style="left:0;top:319.77px;width:48px;height:17.33px;background:#d4d0c8"></div>
<div style="left:0;top:335.60px;width:48px;height:1px;background:#404040"></div>
<div style="left:1px;top:319.77px;width:47px;height:1px;background:#fff"></div>
<div style="left:48px;top:335.60px;width:445px;height:1px;background:#e2cab6"></div>
<div class="t" style="left:2.5000000000000036px;top:322.76px;font-size:12.3px;line-height:12.3px;color:#333;letter-spacing:0.15px">24381</div>
<div class="t" style="left:51.099999999999994px;top:322.76px;font-size:12.3px;line-height:12.3px;color:#333;letter-spacing:0.15px">WS0963.05.17</div>
<div class="t" style="left:156.4px;top:322.76px;font-size:12.3px;line-height:12.3px;color:#333;letter-spacing:0.15px">5/9/2017 11:16:00 AM</div>
<div class="t" style="left:342.3px;top:322.76px;font-size:12.3px;line-height:12.3px;color:#333;letter-spacing:0.15px">2017-05-12</div>
<div class="t" style="left:430.0px;top:322.76px;font-size:12.3px;line-height:12.3px;color:#333;letter-spacing:0.15px">REGIONAL</div>
<div style="left:0;top:336.60px;width:493px;height:17.33px;background:#fde1c6"></div>
<div style="left:0;top:336.60px;width:48px;height:17.33px;background:#d4d0c8"></div>
<div style="left:0;top:352.43px;width:48px;height:1px;background:#404040"></div>
<div style="left:1px;top:336.60px;width:47px;height:1px;background:#fff"></div>
<div style="left:48px;top:352.43px;width:445px;height:1px;background:#e2cab6"></div>
<div class="t" style="left:2.5000000000000036px;top:339.59px;font-size:12.3px;line-height:12.3px;color:#333;letter-spacing:0.15px">24379</div>
<div class="t" style="left:51.099999999999994px;top:339.59px;font-size:12.3px;line-height:12.3px;color:#333;letter-spacing:0.15px">WS0961.05.17</div>
<div class="t" style="left:156.4px;top:339.59px;font-size:12.3px;line-height:12.3px;color:#333;letter-spacing:0.15px">5/8/2017 2:01:00 PM</div>
<div class="t" style="left:342.3px;top:339.59px;font-size:12.3px;line-height:12.3px;color:#333;letter-spacing:0.15px">2017-05-10</div>
<div class="t" style="left:430.0px;top:339.59px;font-size:12.3px;line-height:12.3px;color:#333;letter-spacing:0.15px">REGIONAL</div>
<div style="left:0;top:353.43px;width:493px;height:17.33px;background:#fde1c6"></div>
<div style="left:0;top:353.43px;width:48px;height:17.33px;background:#d4d0c8"></div>
<div style="left:0;top:369.26px;width:48px;height:1px;background:#404040"></div>
<div style="left:1px;top:353.43px;width:47px;height:1px;background:#fff"></div>
<div style="left:48px;top:369.26px;width:445px;height:1px;background:#e2cab6"></div>
<div class="t" style="left:2.5000000000000036px;top:356.42px;font-size:12.3px;line-height:12.3px;color:#333;letter-spacing:0.15px">24378</div>
<div class="t" style="left:51.099999999999994px;top:356.42px;font-size:12.3px;line-height:12.3px;color:#333;letter-spacing:0.15px">WS0960.05.17</div>
<div class="t" style="left:156.4px;top:356.42px;font-size:12.3px;line-height:12.3px;color:#333;letter-spacing:0.15px">5/8/2017 2:01:00 PM</div>
<div class="t" style="left:342.3px;top:356.42px;font-size:12.3px;line-height:12.3px;color:#333;letter-spacing:0.15px">2017-05-10</div>
<div class="t" style="left:430.0px;top:356.42px;font-size:12.3px;line-height:12.3px;color:#333;letter-spacing:0.15px">REGIONAL</div>
<div style="left:0;top:370.26px;width:493px;height:17.33px;background:#fde1c6"></div>
<div style="left:0;top:370.26px;width:48px;height:17.33px;background:#d4d0c8"></div>
<div style="left:0;top:386.09px;width:48px;height:1px;background:#404040"></div>
<div style="left:1px;top:370.26px;width:47px;height:1px;background:#fff"></div>
<div style="left:48px;top:386.09px;width:445px;height:1px;background:#e2cab6"></div>
<div class="t" style="left:2.5000000000000036px;top:373.25px;font-size:12.3px;line-height:12.3px;color:#333;letter-spacing:0.15px">24377</div>
<div class="t" style="left:51.099999999999994px;top:373.25px;font-size:12.3px;line-height:12.3px;color:#333;letter-spacing:0.15px">WS0959.05.17</div>
<div class="t" style="left:156.4px;top:373.25px;font-size:12.3px;line-height:12.3px;color:#333;letter-spacing:0.15px">5/8/2017 12:38:00 PM</div>
<div class="t" style="left:342.3px;top:373.25px;font-size:12.3px;line-height:12.3px;color:#333;letter-spacing:0.15px">2017-05-12</div>
<div class="t" style="left:430.0px;top:373.25px;font-size:12.3px;line-height:12.3px;color:#333;letter-spacing:0.15px">Braathens</div>
<div style="left:0;top:387.09px;width:493px;height:17.33px;background:#fff"></div>
<div style="left:0;top:387.09px;width:48px;height:17.33px;background:#d4d0c8"></div>
<div style="left:0;top:402.92px;width:48px;height:1px;background:#404040"></div>
<div style="left:1px;top:387.09px;width:47px;height:1px;background:#fff"></div>
<div style="left:48px;top:402.92px;width:445px;height:1px;background:#e2cab6"></div>
<div class="t" style="left:2.5000000000000036px;top:390.08px;font-size:12.3px;line-height:12.3px;color:#333;letter-spacing:0.15px">24376</div>
<div class="t" style="left:51.099999999999994px;top:390.08px;font-size:12.3px;line-height:12.3px;color:#333;letter-spacing:0.15px">WS0958.05.17</div>
<div class="t" style="left:156.4px;top:390.08px;font-size:12.3px;line-height:12.3px;color:#333;letter-spacing:0.15px">5/8/2017 12:38:00 PM</div>
<div class="t" style="left:342.3px;top:390.08px;font-size:12.3px;line-height:12.3px;color:#333;letter-spacing:0.15px">2017-05-12</div>
<div class="t" style="left:430.0px;top:390.08px;font-size:12.3px;line-height:12.3px;color:#333;letter-spacing:0.15px">Braathens</div>
<div style="left:0;top:403.92px;width:493px;height:17.33px;background:#fff"></div>
<div style="left:0;top:403.92px;width:48px;height:17.33px;background:#d4d0c8"></div>
<div style="left:0;top:419.75px;width:48px;height:1px;background:#404040"></div>
<div style="left:1px;top:403.92px;width:47px;height:1px;background:#fff"></div>
<div style="left:48px;top:419.75px;width:445px;height:1px;background:#e2cab6"></div>
<div class="t" style="left:2.5000000000000036px;top:406.91px;font-size:12.3px;line-height:12.3px;color:#333;letter-spacing:0.15px">24375</div>
<div class="t" style="left:51.099999999999994px;top:406.91px;font-size:12.3px;line-height:12.3px;color:#333;letter-spacing:0.15px">WS0957.05.17</div>
<div class="t" style="left:156.4px;top:406.91px;font-size:12.3px;line-height:12.3px;color:#333;letter-spacing:0.15px">5/8/2017 12:38:00 PM</div>
<div class="t" style="left:342.3px;top:406.91px;font-size:12.3px;line-height:12.3px;color:#333;letter-spacing:0.15px">2017-05-12</div>
<div class="t" style="left:430.0px;top:406.91px;font-size:12.3px;line-height:12.3px;color:#333;letter-spacing:0.15px">Braathens</div>
<div style="left:0;top:420.75px;width:493px;height:17.33px;background:#fde1c6"></div>
<div style="left:0;top:420.75px;width:48px;height:17.33px;background:#d4d0c8"></div>
<div style="left:0;top:436.58px;width:48px;height:1px;background:#404040"></div>
<div style="left:1px;top:420.75px;width:47px;height:1px;background:#fff"></div>
<div style="left:48px;top:436.58px;width:445px;height:1px;background:#e2cab6"></div>
<div class="t" style="left:2.5000000000000036px;top:423.74px;font-size:12.3px;line-height:12.3px;color:#333;letter-spacing:0.15px">24374</div>
<div class="t" style="left:51.099999999999994px;top:423.74px;font-size:12.3px;line-height:12.3px;color:#333;letter-spacing:0.15px">WS0956.05.17</div>
<div class="t" style="left:156.4px;top:423.74px;font-size:12.3px;line-height:12.3px;color:#333;letter-spacing:0.15px">5/8/2017 12:38:00 PM</div>
<div class="t" style="left:342.3px;top:423.74px;font-size:12.3px;line-height:12.3px;color:#333;letter-spacing:0.15px">2017-05-12</div>
<div class="t" style="left:430.0px;top:423.74px;font-size:12.3px;line-height:12.3px;color:#333;letter-spacing:0.15px">Braathens</div>
<div style="left:0;top:437.58px;width:493px;height:17.33px;background:#fde1c6"></div>
<div style="left:0;top:437.58px;width:48px;height:17.33px;background:#d4d0c8"></div>
<div style="left:0;top:453.41px;width:48px;height:1px;background:#404040"></div>
<div style="left:1px;top:437.58px;width:47px;height:1px;background:#fff"></div>
<div style="left:48px;top:453.41px;width:445px;height:1px;background:#e2cab6"></div>
<div class="t" style="left:2.5000000000000036px;top:440.57px;font-size:12.3px;line-height:12.3px;color:#333;letter-spacing:0.15px">24373</div>
<div class="t" style="left:51.099999999999994px;top:440.57px;font-size:12.3px;line-height:12.3px;color:#333;letter-spacing:0.15px">WS0955.05.17</div>
<div class="t" style="left:156.4px;top:440.57px;font-size:12.3px;line-height:12.3px;color:#333;letter-spacing:0.15px">5/8/2017 12:38:00 PM</div>
<div class="t" style="left:342.3px;top:440.57px;font-size:12.3px;line-height:12.3px;color:#333;letter-spacing:0.15px">2017-05-12</div>
<div class="t" style="left:430.0px;top:440.57px;font-size:12.3px;line-height:12.3px;color:#333;letter-spacing:0.15px">Braathens</div>
<div style="left:0;top:454.41px;width:493px;height:17.33px;background:#fde1c6"></div>
<div style="left:0;top:454.41px;width:48px;height:17.33px;background:#d4d0c8"></div>
<div style="left:0;top:470.24px;width:48px;height:1px;background:#404040"></div>
<div style="left:1px;top:454.41px;width:47px;height:1px;background:#fff"></div>
<div style="left:48px;top:470.24px;width:445px;height:1px;background:#e2cab6"></div>
<div class="t" style="left:2.5000000000000036px;top:457.40px;font-size:12.3px;line-height:12.3px;color:#333;letter-spacing:0.15px">24372</div>
<div class="t" style="left:51.099999999999994px;top:457.40px;font-size:12.3px;line-height:12.3px;color:#333;letter-spacing:0.15px">WS0954.05.17</div>
<div class="t" style="left:156.4px;top:457.40px;font-size:12.3px;line-height:12.3px;color:#333;letter-spacing:0.15px">5/8/2017 12:38:00 PM</div>
<div class="t" style="left:342.3px;top:457.40px;font-size:12.3px;line-height:12.3px;color:#333;letter-spacing:0.15px">2017-05-12</div>
<div class="t" style="left:430.0px;top:457.40px;font-size:12.3px;line-height:12.3px;color:#333;letter-spacing:0.15px">Braathens</div>
<div style="left:0;top:471.24px;width:493px;height:17.33px;background:#fde1c6"></div>
<div style="left:0;top:471.24px;width:48px;height:17.33px;background:#d4d0c8"></div>
<div style="left:0;top:487.07px;width:48px;height:1px;background:#404040"></div>
<div style="left:1px;top:471.24px;width:47px;height:1px;background:#fff"></div>
<div style="left:48px;top:487.07px;width:445px;height:1px;background:#e2cab6"></div>
<div class="t" style="left:2.5000000000000036px;top:474.23px;font-size:12.3px;line-height:12.3px;color:#333;letter-spacing:0.15px">24371</div>
<div class="t" style="left:51.099999999999994px;top:474.23px;font-size:12.3px;line-height:12.3px;color:#333;letter-spacing:0.15px">WS0953.05.17</div>
<div class="t" style="left:156.4px;top:474.23px;font-size:12.3px;line-height:12.3px;color:#333;letter-spacing:0.15px">5/8/2017 12:38:00 PM</div>
<div class="t" style="left:342.3px;top:474.23px;font-size:12.3px;line-height:12.3px;color:#333;letter-spacing:0.15px">2017-05-12</div>
<div class="t" style="left:430.0px;top:474.23px;font-size:12.3px;line-height:12.3px;color:#333;letter-spacing:0.15px">Braathens</div>
<div style="left:0;top:488.07px;width:493px;height:17.33px;background:#fde1c6"></div>
<div style="left:0;top:488.07px;width:48px;height:17.33px;background:#d4d0c8"></div>
<div style="left:0;top:503.90px;width:48px;height:1px;background:#404040"></div>
<div style="left:1px;top:488.07px;width:47px;height:1px;background:#fff"></div>
<div style="left:48px;top:503.90px;width:445px;height:1px;background:#e2cab6"></div>
<div class="t" style="left:2.5000000000000036px;top:491.06px;font-size:12.3px;line-height:12.3px;color:#333;letter-spacing:0.15px">24369</div>
<div class="t" style="left:51.099999999999994px;top:491.06px;font-size:12.3px;line-height:12.3px;color:#333;letter-spacing:0.15px">WS0951.05.17</div>
<div class="t" style="left:156.4px;top:491.06px;font-size:12.3px;line-height:12.3px;color:#333;letter-spacing:0.15px">5/8/2017 12:38:00 PM</div>
<div class="t" style="left:342.3px;top:491.06px;font-size:12.3px;line-height:12.3px;color:#333;letter-spacing:0.15px">2017-05-12</div>
<div class="t" style="left:430.0px;top:491.06px;font-size:12.3px;line-height:12.3px;color:#333;letter-spacing:0.15px">Braathens</div>
<div style="left:0;top:504.90px;width:493px;height:17.33px;background:#fde1c6"></div>
<div style="left:0;top:504.90px;width:48px;height:17.33px;background:#d4d0c8"></div>
<div style="left:0;top:520.73px;width:48px;height:1px;background:#404040"></div>
<div style="left:1px;top:504.90px;width:47px;height:1px;background:#fff"></div>
<div style="left:48px;top:520.73px;width:445px;height:1px;background:#e2cab6"></div>
<div class="t" style="left:2.5000000000000036px;top:507.89px;font-size:12.3px;line-height:12.3px;color:#333;letter-spacing:0.15px">24368</div>
<div class="t" style="left:51.099999999999994px;top:507.89px;font-size:12.3px;line-height:12.3px;color:#333;letter-spacing:0.15px">WS0950.05.17</div>
<div class="t" style="left:156.4px;top:507.89px;font-size:12.3px;line-height:12.3px;color:#333;letter-spacing:0.15px">5/8/2017 12:38:00 PM</div>
<div class="t" style="left:342.3px;top:507.89px;font-size:12.3px;line-height:12.3px;color:#333;letter-spacing:0.15px">2017-05-12</div>
<div class="t" style="left:430.0px;top:507.89px;font-size:12.3px;line-height:12.3px;color:#333;letter-spacing:0.15px">Braathens</div>
<div style="left:48px;top:0;width:1px;height:508px;background:#404040"></div>
<div style="left:0;top:0;width:1px;height:508px;background:#fff"></div>
<div style="left:152.7px;top:0;width:1px;height:508px;background:#d8c6b8"></div>
<div style="left:338.7px;top:0;width:1px;height:508px;background:#d8c6b8"></div>
<div style="left:427px;top:0;width:1px;height:508px;background:#d8c6b8"></div>
</div>
<div style="left:522.5px;top:143px;width:14.5px;height:525px;background:repeating-conic-gradient(#fff 0 25%, #d4d0c8 0 50%) 0 0/2px 2px"></div>
<div style="left:522.5px;top:143.5px;width:14px;height:14px;background:#d4d0c8;border-top:1px solid #d4d0c8;border-left:1px solid #d4d0c8;border-right:1px solid #404040;border-bottom:1px solid #404040;box-sizing:border-box;box-shadow:inset 1px 1px #fff,inset -1px -1px #808080"></div>
<svg style="position:absolute;left:522.5px;top:143.5px" width="14" height="14"><path d="M3.5 8.5 H10.5 L7.0 5.0 Z" fill="#000"/></svg>
<div style="left:522.5px;top:157.5px;width:14px;height:14px;background:#d4d0c8;border-top:1px solid #d4d0c8;border-left:1px solid #d4d0c8;border-right:1px solid #404040;border-bottom:1px solid #404040;box-sizing:border-box;box-shadow:inset 1px 1px #fff,inset -1px -1px #808080"></div>
<div style="left:522.5px;top:655px;width:14px;height:13.5px;background:#d4d0c8;border-top:1px solid #d4d0c8;border-left:1px solid #d4d0c8;border-right:1px solid #404040;border-bottom:1px solid #404040;box-sizing:border-box;box-shadow:inset 1px 1px #fff,inset -1px -1px #808080"></div>
<svg style="position:absolute;left:522.5px;top:655px" width="14" height="13.5"><path d="M3.5 5.25 H10.5 L7.0 8.75 Z" fill="#000"/></svg>
<div style="left:30px;top:668px;width:492.5px;height:15px;background:repeating-conic-gradient(#fff 0 25%, #d4d0c8 0 50%) 0 0/2px 2px"></div>
<div style="left:29.5px;top:668.5px;width:14px;height:14.5px;background:#d4d0c8;border-top:1px solid #d4d0c8;border-left:1px solid #d4d0c8;border-right:1px solid #404040;border-bottom:1px solid #404040;box-sizing:border-box;box-shadow:inset 1px 1px #fff,inset -1px -1px #808080"></div>
<svg style="position:absolute;left:29.5px;top:668.5px" width="14" height="14.5"><path d="M8.5 3.75 V10.75 L5.0 7.25 Z" fill="#000"/></svg>
<div style="left:44px;top:668.5px;width:14px;height:14.5px;background:#d4d0c8;border-top:1px solid #d4d0c8;border-left:1px solid #d4d0c8;border-right:1px solid #404040;border-bottom:1px solid #404040;box-sizing:border-box;box-shadow:inset 1px 1px #fff,inset -1px -1px #808080"></div>
<div style="left:508px;top:669px;width:14px;height:14px;background:#d4d0c8;border-top:1px solid #d4d0c8;border-left:1px solid #d4d0c8;border-right:1px solid #404040;border-bottom:1px solid #404040;box-sizing:border-box;box-shadow:inset 1px 1px #fff,inset -1px -1px #808080"></div>
<svg style="position:absolute;left:508px;top:669px" width="14" height="14"><path d="M5.5 3.5 V10.5 L9.0 7.0 Z" fill="#000"/></svg>
<div style="left:522.5px;top:668px;width:14.5px;height:15px;background:#d4d0c8"></div>
<div style="left:27px;top:687px;width:178px;height:13px;border-top:1px solid #808080;border-left:1px solid #808080;border-right:1px solid #fff;border-bottom:1px solid #fff;box-sizing:border-box"></div>
<div class="t" style="left:31.8px;top:689.74px;font-size:7.4px;line-height:7.4px;color:#101010;font-weight:bold;letter-spacing:0.2px">Found 200 Work Orders</div>
<div style="left:551px;top:87px;width:852px;height:1px;background:#808080"></div>
<div style="left:552px;top:88px;width:851px;height:1px;background:#fff"></div>
<div style="left:551px;top:87px;width:1px;height:638px;background:#808080"></div>
<div style="left:552px;top:88px;width:1px;height:636px;background:#fff"></div>
<div style="left:551px;top:724px;width:852px;height:1px;background:#808080"></div>
<div style="left:551px;top:725px;width:853px;height:1px;background:#fff"></div>
<div style="left:1402px;top:87px;width:1px;height:638px;background:#808080"></div>
<div style="left:1403px;top:87px;width:1px;height:639px;background:#fff"></div>
<div style="left:558px;top:78px;width:158px;height:18px;background:#d4d0c8"></div>
<div class="t" style="left:560px;top:78.73px;font-size:16.5px;line-height:16.5px;color:#0c0e86;font-weight:bold;letter-spacing:0.25px;text-shadow:0.4px 0 0 #0c0e86">Service WO Editor:</div>
<div style="left:557px;top:98px;width:526px;height:21px;background:#d4d0c8;border-top:1px solid #fff;border-left:1px solid #fff;border-right:1px solid #808080;border-bottom:1px solid #808080;box-sizing:border-box"></div>
<div style="left:560.5px;top:101px;width:1px;height:16px;background:#808080"></div>
<div style="left:561.5px;top:101px;width:1px;height:16px;background:#fff"></div>
<div style="left:626.5px;top:101px;width:1px;height:16px;background:#808080"></div>
<div style="left:627.5px;top:101px;width:1px;height:16px;background:#fff"></div>
<div style="left:692px;top:101px;width:1px;height:16px;background:#808080"></div>
<div style="left:693px;top:101px;width:1px;height:16px;background:#fff"></div>
<div style="left:757.3px;top:101px;width:1px;height:16px;background:#808080"></div>
<div style="left:758.3px;top:101px;width:1px;height:16px;background:#fff"></div>
<div style="left:822.9px;top:101px;width:1px;height:16px;background:#808080"></div>
<div style="left:823.9px;top:101px;width:1px;height:16px;background:#fff"></div>
<div style="left:888.8px;top:101px;width:1px;height:16px;background:#808080"></div>
<div style="left:889.8px;top:101px;width:1px;height:16px;background:#fff"></div>
<div style="left:954.5px;top:101px;width:1px;height:16px;background:#808080"></div>
<div style="left:955.5px;top:101px;width:1px;height:16px;background:#fff"></div>
<div style="left:1019.7px;top:101px;width:1px;height:16px;background:#808080"></div>
<div style="left:1020.7px;top:101px;width:1px;height:16px;background:#fff"></div>
<div class="t" style="left:586px;top:104.79px;font-size:9.7px;line-height:9.7px;color:#000;">Refresh</div>
<div class="t" style="left:669px;top:104.79px;font-size:9.7px;line-height:9.7px;color:#000;">Add</div>
<div class="t" style="left:720px;top:104.96px;font-size:9.5px;line-height:9.5px;color:#a09c94;text-shadow:1px 1px #fff">Update</div>
<div class="t" style="left:789.5px;top:104.96px;font-size:9.5px;line-height:9.5px;color:#a09c94;text-shadow:1px 1px #fff">Delete</div>
<div class="t" style="left:851px;top:104.96px;font-size:9.5px;line-height:9.5px;color:#a09c94;text-shadow:1px 1px #fff">Comply</div>
<div class="t" style="left:913px;top:104.96px;font-size:9.5px;line-height:9.5px;color:#a09c94;text-shadow:1px 1px #fff">Set BMS</div>
<div class="t" style="left:1000.5px;top:104.87px;font-size:9.6px;line-height:9.6px;color:#000;font-weight:bold;">PO</div>
<svg style="position:absolute;left:570px;top:103px" width="14" height="12" viewBox="0 0 14 12"><path d="M4 3.5 H9 Q11.3 3.5 11.3 6.5 Q11.3 9.5 9 9.5 H5" stroke="#0a5a0a" stroke-width="3" fill="none"/><path d="M4 3.5 H9 Q11.3 3.5 11.3 6.5 Q11.3 9.5 9 9.5 H5" stroke="#30d030" stroke-width="1.4" fill="none"/><path d="M0.8 3.5 L4.6 0.6 V6.4 Z" fill="#30d030" stroke="#0a5a0a" stroke-width="0.9"/></svg>
<svg style="position:absolute;left:635px;top:102px" width="14" height="14" viewBox="0 0 14 14"><path d="M4 2 H9 L11 4 V12 H4 Z" fill="#30d0e0" stroke="#404040"/><g stroke="#202020" stroke-width="1"><line x1="0" y1="3" x2="3" y2="3"/><line x1="0" y1="11" x2="3" y2="11"/><line x1="11" y1="1" x2="14" y2="1"/><line x1="11" y1="13" x2="14" y2="13"/><line x1="7" y1="0" x2="7" y2="1.5"/><line x1="7" y1="12.5" x2="7" y2="14"/></g></svg>
<svg style="position:absolute;left:700px;top:102px" width="15" height="14" viewBox="0 0 15 14"><rect x="1" y="1" width="5" height="5" fill="#c0c0c0" stroke="#808080"/><path d="M7 4 H11 V8" stroke="#808080" fill="none" stroke-width="1.2"/><path d="M9 7 L11 10 L13 7" stroke="#808080" fill="none"/><rect x="5" y="10" width="9" height="3" fill="#fff" stroke="#808080"/></svg>
<svg style="position:absolute;left:766px;top:102px" width="15" height="14" viewBox="0 0 15 14"><rect x="0" y="0" width="15" height="14" fill="#fff"/><rect x="0.5" y="0.5" width="13.5" height="12.5" fill="#7c7c7c"/><rect x="3.5" y="5" width="2" height="7" fill="#b8b8b8"/><rect x="3.5" y="2" width="2" height="2" fill="#b8b8b8"/></svg>
<svg style="position:absolute;left:830px;top:102px" width="15" height="14" viewBox="0 0 15 14"><path d="M1 8 L5 12 L14 1" stroke="#808080" stroke-width="2.4" fill="none"/></svg>
<svg style="position:absolute;left:897px;top:103px" width="13" height="12" viewBox="0 0 13 12"><rect x="5" y="1" width="7" height="10" fill="#c8c8c8" stroke="#808080"/><path d="M1 6 H7" stroke="#606060" stroke-width="2"/><path d="M5 3 L8 6 L5 9" fill="#606060"/><line x1="8" y1="4" x2="11" y2="4" stroke="#fff"/><line x1="8" y1="8" x2="11" y2="8" stroke="#fff"/></svg>
<svg style="position:absolute;left:961px;top:101px" width="16" height="15" viewBox="0 0 16 15"><path d="M1 4 Q4 1 8 3 Q12 5 14 2 V7 Q11 10 8 8 Q4 6 1 9 Z" fill="#80b040" stroke="#806020" stroke-width="0.8"/><path d="M2 9 Q5 6 9 8 Q13 10 15 7 V12 Q12 15 9 13 Q5 11 2 14 Z" fill="#e09040" stroke="#806020" stroke-width="0.8"/></svg>
<div class="t" style="left:1129px;top:95.07px;font-size:13.5px;line-height:13.5px;color:#3c3c3c;">Group:</div>
<div class="t" style="left:1175px;top:95.19px;font-size:11px;line-height:11px;color:#e02020;">*</div>
<div style="left:1085.5px;top:109.5px;width:142px;height:23px;background:#fff;border-top:1px solid #808080;border-left:1px solid #808080;border-right:1px solid #d4d0c8;border-bottom:1px solid #d4d0c8;box-sizing:border-box;box-shadow:inset 1px 1px #404040"></div>
<div style="left:1227.5px;top:109.5px;width:1px;height:24px;background:#fff"></div>
<div style="left:1085.5px;top:132.5px;width:143px;height:1px;background:#fff"></div>
<div style="left:1211.5px;top:111.5px;width:14px;height:19px;background:#d4d0c8;border-top:1px solid #d4d0c8;border-left:1px solid #d4d0c8;border-right:1px solid #404040;border-bottom:1px solid #404040;box-sizing:border-box;box-shadow:inset 1px 1px #fff,inset -1px -1px #808080"></div>
<svg style="position:absolute;left:1211.5px;top:111.5px" width="14" height="19"><path d="M3.5 8.0 H10.5 L7.0 11.5 Z" fill="#000"/></svg>
<div style="left:1232px;top:104px;width:157px;height:31.5px;background:#fff;border:1px solid #202020;box-sizing:border-box"></div>
<div class="t" style="left:1010.5px;width:600px;text-align:center;top:107.42px;font-size:21px;line-height:21px;color:#1414a8;font-weight:bold;letter-spacing:-0.3px">WS0004.08.24</div>
<div class="t" style="left:585.3px;top:139.47px;font-size:13.5px;line-height:13.5px;color:#3c3c3c;">WO Date:</div>
<div class="t" style="left:664.5px;top:139.69px;font-size:11px;line-height:11px;color:#e02020;">*</div>
<div style="left:566px;top:154.5px;width:114px;height:25px;background:#fff;border:1px solid #202020;box-sizing:border-box"></div>
<div style="left:679px;top:154.5px;width:72.5px;height:25px;background:#fff;border:1px solid #202020;box-sizing:border-box"></div>
<div class="t" style="left:323px;width:600px;text-align:center;top:157.45px;font-size:14px;line-height:14px;color:#1414a8;font-weight:bold;">07.08.20</div>
<div class="t" style="left:415.5px;width:600px;text-align:center;top:157.45px;font-size:14px;line-height:14px;color:#1414a8;font-weight:bold;">13:39</div>
<div style="left:679.5px;top:130px;width:43px;height:25.5px;background:#c8c8f8;border-top:1px solid #fff;border-left:1px solid #fff;border-right:1px solid #404040;border-bottom:1px solid #404040;box-sizing:border-box;box-shadow:inset -1px -1px #8080a0"></div>
<svg style="position:absolute;left:694px;top:135.5px" width="15" height="14" viewBox="0 0 15 14"><rect x="0.5" y="0.5" width="14" height="13" fill="#fff" stroke="#202020"/><rect x="0.5" y="0.5" width="14" height="3" fill="#2030a0"/><g fill="#c04040"><rect x="2" y="5" width="2" height="2"/><rect x="5" y="5" width="2" height="2"/><rect x="8" y="5" width="2" height="2"/><rect x="11" y="5" width="2" height="2"/><rect x="2" y="8" width="2" height="2"/><rect x="8" y="8" width="2" height="2"/><rect x="5" y="11" width="2" height="1.5"/><rect x="11" y="11" width="2" height="1.5"/></g><g fill="#606060"><rect x="5" y="8" width="2" height="2"/><rect x="11" y="8" width="2" height="2"/><rect x="2" y="11" width="2" height="1.5"/><rect x="8" y="11" width="2" height="1.5"/></g></svg>
<div style="left:757px;top:154.5px;width:369px;height:22.5px;background:#fff;border-top:1px solid #808080;border-left:1px solid #808080;border-right:1px solid #d4d0c8;border-bottom:1px solid #d4d0c8;box-sizing:border-box;box-shadow:inset 1px 1px #404040"></div>
<div style="left:1126px;top:154.5px;width:1px;height:23.5px;background:#fff"></div>
<div style="left:757px;top:177.0px;width:370px;height:1px;background:#fff"></div>
<div style="left:1110px;top:156.5px;width:14px;height:18.5px;background:#d4d0c8;border-top:1px solid #d4d0c8;border-left:1px solid #d4d0c8;border-right:1px solid #404040;border-bottom:1px solid #404040;box-sizing:border-box;box-shadow:inset 1px 1px #fff,inset -1px -1px #808080"></div>
<svg style="position:absolute;left:1110px;top:156.5px" width="14" height="18.5"><path d="M3.5 7.75 H10.5 L7.0 11.25 Z" fill="#000"/></svg>
<div class="t" style="left:760px;top:157.95px;font-size:14px;line-height:14px;color:#1414a8;font-weight:bold;">Air Lituanica UAB</div>
<div class="t" style="left:1176px;top:140.17px;font-size:13.5px;line-height:13.5px;color:#3c3c3c;">Customer Order Reference:</div>
<div class="t" style="left:1373.5px;top:139.69px;font-size:11px;line-height:11px;color:#e02020;">*</div>
<div class="t" style="left:902px;top:140.17px;font-size:13.5px;line-height:13.5px;color:#3c3c3c;">Customer:</div>
<div class="t" style="left:977px;top:139.69px;font-size:11px;line-height:11px;color:#e02020;">*</div>
<div style="left:1132.5px;top:154.5px;width:256.5px;height:25px;background:#fff;border:1px solid #202020;box-sizing:border-box"></div>
<div class="t" style="left:960.7px;width:600px;text-align:center;top:158.27px;font-size:13.5px;line-height:13.5px;color:#1414a8;font-weight:bold;">AL-0034/2</div>
<div class="t" style="left:661.3px;top:184.97px;font-size:13.5px;line-height:13.5px;color:#3c3c3c;">PN:</div>
<div class="t" style="left:707px;top:185.19px;font-size:11px;line-height:11px;color:#e02020;">*</div>
<div style="left:757.4px;top:180.4px;width:154.5px;height:19.5px;background:#fff;border:1px solid #202020;box-sizing:border-box"></div>
<div class="t" style="left:919px;top:185.27px;font-size:13.5px;line-height:13.5px;color:#3c3c3c;">SN:</div>
<div class="t" style="left:962.4px;top:185.19px;font-size:11px;line-height:11px;color:#e02020;">*</div>
<div class="t" style="left:1089.5px;top:185.17px;font-size:13.5px;line-height:13.5px;color:#3c3c3c;">A/C Type:</div>
<div style="left:566px;top:200.6px;width:226px;height:22px;background:#fff;border-top:1px solid #808080;border-left:1px solid #808080;border-right:1px solid #d4d0c8;border-bottom:1px solid #d4d0c8;box-sizing:border-box;box-shadow:inset 1px 1px #404040"></div>
<div style="left:792px;top:200.6px;width:1px;height:23px;background:#fff"></div>
<div style="left:566px;top:222.6px;width:227px;height:1px;background:#fff"></div>
<div style="left:776px;top:202.6px;width:14px;height:18px;background:#d4d0c8;border-top:1px solid #d4d0c8;border-left:1px solid #d4d0c8;border-right:1px solid #404040;border-bottom:1px solid #404040;box-sizing:border-box;box-shadow:inset 1px 1px #fff,inset -1px -1px #808080"></div>
<svg style="position:absolute;left:776px;top:202.6px" width="14" height="18"><path d="M3.5 7.5 H10.5 L7.0 11.0 Z" fill="#000"/></svg>
<div class="t" style="left:568px;top:203.15px;font-size:14px;line-height:14px;color:#1414a8;font-weight:bold;letter-spacing:0.28px">806369SERIES</div>
<div style="left:802.4px;top:199.6px;width:256.5px;height:25px;background:#fff;border:1px solid #202020;box-sizing:border-box"></div>
<div class="t" style="left:629.5px;width:600px;text-align:center;top:202.65px;font-size:14px;line-height:14px;color:#1414a8;font-weight:bold;">63241</div>
<div style="left:1062.4px;top:199px;width:126.5px;height:23px;background:#fff;border-top:1px solid #808080;border-left:1px solid #808080;border-right:1px solid #d4d0c8;border-bottom:1px solid #d4d0c8;box-sizing:border-box;box-shadow:inset 1px 1px #404040"></div>
<div style="left:1188.9px;top:199px;width:1px;height:24px;background:#fff"></div>
<div style="left:1062.4px;top:222px;width:127.5px;height:1px;background:#fff"></div>
<div style="left:1172.9px;top:201px;width:14px;height:19px;background:#d4d0c8;border-top:1px solid #d4d0c8;border-left:1px solid #d4d0c8;border-right:1px solid #404040;border-bottom:1px solid #404040;box-sizing:border-box;box-shadow:inset 1px 1px #fff,inset -1px -1px #808080"></div>
<svg style="position:absolute;left:1172.9px;top:201px" width="14" height="19"><path d="M3.5 8.0 H10.5 L7.0 11.5 Z" fill="#000"/></svg>
<div class="t" style="left:1064px;top:203.15px;font-size:14px;line-height:14px;color:#1414a8;font-weight:bold;">B737-200</div>
<div class="t" style="left:742px;top:229.07px;font-size:13.5px;line-height:13.5px;color:#3c3c3c;">Description:</div>
<div class="t" style="left:848.8px;top:229.69px;font-size:11px;line-height:11px;color:#e02020;">*</div>
<div class="t" style="left:1046.4px;top:229.07px;font-size:13.5px;line-height:13.5px;color:#3c3c3c;">Contract Type:</div>
<div class="t" style="left:1160.7px;top:229.69px;font-size:11px;line-height:11px;color:#e02020;">*</div>
<div class="t" style="left:1205px;top:229.07px;font-size:13.5px;line-height:13.5px;color:#3c3c3c;">A/C Reg:</div>
<div class="t" style="left:1273.7px;top:229.69px;font-size:11px;line-height:11px;color:#e02020;">*</div>
<div class="t" style="left:1306.8px;top:229.07px;font-size:13.5px;line-height:13.5px;color:#3c3c3c;">Treatment:</div>
<div class="t" style="left:1383.5px;top:229.69px;font-size:11px;line-height:11px;color:#e02020;">*</div>
<div style="left:566px;top:244px;width:426px;height:24.5px;background:#fff;border:1px solid #202020;box-sizing:border-box"></div>
<div class="t" style="left:569px;top:247.65px;font-size:14px;line-height:14px;color:#1414a8;font-weight:bold;">OXYGEN CYLINDER&amp;VALVE ASSY</div>
<div style="left:998.2px;top:244.5px;width:183px;height:22px;background:#fff;border-top:1px solid #808080;border-left:1px solid #808080;border-right:1px solid #d4d0c8;border-bottom:1px solid #d4d0c8;box-sizing:border-box;box-shadow:inset 1px 1px #404040"></div>
<div style="left:1181.2px;top:244.5px;width:1px;height:23px;background:#fff"></div>
<div style="left:998.2px;top:266.5px;width:184px;height:1px;background:#fff"></div>
<div style="left:1165.2px;top:246.5px;width:14px;height:18px;background:#d4d0c8;border-top:1px solid #d4d0c8;border-left:1px solid #d4d0c8;border-right:1px solid #404040;border-bottom:1px solid #404040;box-sizing:border-box;box-shadow:inset 1px 1px #fff,inset -1px -1px #808080"></div>
<svg style="position:absolute;left:1165.2px;top:246.5px" width="14" height="18"><path d="M3.5 7.5 H10.5 L7.0 11.0 Z" fill="#000"/></svg>
<div class="t" style="left:1001px;top:248.15px;font-size:14px;line-height:14px;color:#1414a8;font-weight:bold;">NA</div>
<div style="left:1190px;top:244.5px;width:97.7px;height:22px;background:#fff;border-top:1px solid #808080;border-left:1px solid #808080;border-right:1px solid #d4d0c8;border-bottom:1px solid #d4d0c8;box-sizing:border-box;box-shadow:inset 1px 1px #404040"></div>
<div style="left:1287.7px;top:244.5px;width:1px;height:23px;background:#fff"></div>
<div style="left:1190px;top:266.5px;width:98.7px;height:1px;background:#fff"></div>
<div style="left:1271.7px;top:246.5px;width:14px;height:18px;background:#d4d0c8;border-top:1px solid #d4d0c8;border-left:1px solid #d4d0c8;border-right:1px solid #404040;border-bottom:1px solid #404040;box-sizing:border-box;box-shadow:inset 1px 1px #fff,inset -1px -1px #808080"></div>
<svg style="position:absolute;left:1271.7px;top:246.5px" width="14" height="18"><path d="M3.5 7.5 H10.5 L7.0 11.0 Z" fill="#000"/></svg>
<div class="t" style="left:1192px;top:248.15px;font-size:14px;line-height:14px;color:#1414a8;font-weight:bold;">VP-BWW</div>
<div style="left:1303px;top:244.5px;width:84.6px;height:22px;background:#fff;border-top:1px solid #808080;border-left:1px solid #808080;border-right:1px solid #d4d0c8;border-bottom:1px solid #d4d0c8;box-sizing:border-box;box-shadow:inset 1px 1px #404040"></div>
<div style="left:1387.6px;top:244.5px;width:1px;height:23px;background:#fff"></div>
<div style="left:1303px;top:266.5px;width:85.6px;height:1px;background:#fff"></div>
<div style="left:1371.6px;top:246.5px;width:14px;height:18px;background:#d4d0c8;border-top:1px solid #d4d0c8;border-left:1px solid #d4d0c8;border-right:1px solid #404040;border-bottom:1px solid #404040;box-sizing:border-box;box-shadow:inset 1px 1px #fff,inset -1px -1px #808080"></div>
<svg style="position:absolute;left:1371.6px;top:246.5px" width="14" height="18"><path d="M3.5 7.5 H10.5 L7.0 11.0 Z" fill="#000"/></svg>
<div style="left:1304.7px;top:247px;width:21px;height:16px;background:#0a246a"></div>
<div class="t" style="left:1305px;top:248.15px;font-size:14px;line-height:14px;color:#fff;font-weight:bold;">OH</div>
<div style="left:566px;top:287.5px;width:326px;height:1px;background:#808080"></div>
<div style="left:567px;top:288.5px;width:325px;height:1px;background:#fff"></div>
<div style="left:566px;top:287.5px;width:1px;height:75.5px;background:#808080"></div>
<div style="left:567px;top:288.5px;width:1px;height:74.5px;background:#fff"></div>
<div style="left:566px;top:362.0px;width:326px;height:1px;background:#808080"></div>
<div style="left:566px;top:363.0px;width:327px;height:1px;background:#fff"></div>
<div style="left:891px;top:287.5px;width:1px;height:75.5px;background:#808080"></div>
<div style="left:892px;top:287.5px;width:1px;height:76.5px;background:#fff"></div>
<div style="left:572px;top:280px;width:42px;height:14px;background:#d4d0c8"></div>
<div class="t" style="left:574.3px;top:281.20px;font-size:13px;line-height:13px;color:#000;font-weight:bold;letter-spacing:0.7px">Time:</div>
<div class="t" style="left:588.3px;top:303.00px;font-size:13px;line-height:13px;color:#505050;">TSO :</div>
<div class="t" style="left:586.6px;top:335.00px;font-size:13px;line-height:13px;color:#505050;">CSO :</div>
<div class="t" style="left:744px;top:303.00px;font-size:13px;line-height:13px;color:#505050;">TSN :</div>
<div class="t" style="left:746.4px;top:335.00px;font-size:13px;line-height:13px;color:#505050;">CSN :</div>
<div style="left:636.5px;top:300.3px;width:86.5px;height:25.3px;background:#fff;border:1px solid #202020;box-sizing:border-box"></div>
<div class="t" style="left:379.75px;width:600px;text-align:center;top:303.90px;font-size:13px;line-height:13px;color:#1414a8;font-weight:bold;">NA</div>
<div style="left:636.5px;top:332.2px;width:86.5px;height:25.3px;background:#fff;border:1px solid #202020;box-sizing:border-box"></div>
<div class="t" style="left:379.75px;width:600px;text-align:center;top:335.80px;font-size:13px;line-height:13px;color:#1414a8;font-weight:bold;">NA</div>
<div style="left:792px;top:300.3px;width:86.5px;height:25.3px;background:#fff;border:1px solid #202020;box-sizing:border-box"></div>
<div class="t" style="left:535.25px;width:600px;text-align:center;top:303.90px;font-size:13px;line-height:13px;color:#1414a8;font-weight:bold;">NA</div>
<div style="left:792px;top:332.2px;width:86.5px;height:25.3px;background:#fff;border:1px solid #202020;box-sizing:border-box"></div>
<div class="t" style="left:535.25px;width:600px;text-align:center;top:335.80px;font-size:13px;line-height:13px;color:#1414a8;font-weight:bold;">NA</div>
<div style="left:891.8px;top:287.5px;width:497px;height:1px;background:#808080"></div>
<div style="left:892.8px;top:288.5px;width:496px;height:1px;background:#fff"></div>
<div style="left:891.8px;top:287.5px;width:1px;height:75.5px;background:#808080"></div>
<div style="left:892.8px;top:288.5px;width:1px;height:74.5px;background:#fff"></div>
<div style="left:891.8px;top:362.0px;width:497px;height:1px;background:#808080"></div>
<div style="left:891.8px;top:363.0px;width:498px;height:1px;background:#fff"></div>
<div style="left:1387.8px;top:287.5px;width:1px;height:75.5px;background:#808080"></div>
<div style="left:1388.8px;top:287.5px;width:1px;height:76.5px;background:#fff"></div>
<div style="left:898px;top:280px;width:200px;height:14px;background:#d4d0c8"></div>
<div class="t" style="left:900px;top:281.30px;font-size:13px;line-height:13px;color:#000;font-weight:bold;letter-spacing:0.55px">Reason for Removal:</div>
<div style="left:1042px;top:287.5px;width:46px;height:1px;background:#808080"></div>
<div style="left:1042px;top:288.5px;width:46px;height:1px;background:#fff"></div>
<div style="left:1088px;top:284px;width:18px;height:8px;background:#d4d0c8"></div>
<div class="t" style="left:1091px;top:282.69px;font-size:11px;line-height:11px;color:#e02020;">*</div>
<div style="left:906.2px;top:300.6px;width:456px;height:59px;background:#fff;border:1px solid #202020;box-sizing:border-box"></div>
<div style="left:1361.6px;top:300.6px;width:13.6px;height:58.7px;background:repeating-conic-gradient(#fff 0 25%, #d4d0c8 0 50%) 0 0/2px 2px"></div>
<div style="left:1361.6px;top:300.6px;width:13.6px;height:12.5px;background:#d4d0c8;border-top:1px solid #d4d0c8;border-left:1px solid #d4d0c8;border-right:1px solid #404040;border-bottom:1px solid #404040;box-sizing:border-box;box-shadow:inset 1px 1px #fff,inset -1px -1px #808080"></div>
<svg style="position:absolute;left:1361.6px;top:300.6px" width="13.6" height="12.5"><path d="M3.3 7.75 H10.3 L6.8 4.25 Z" fill="#fff" transform="translate(1,1)"/><path d="M3.3 7.75 H10.3 L6.8 4.25 Z" fill="#a0a0a0"/></svg>
<div style="left:1361.6px;top:346.6px;width:13.6px;height:12.7px;background:#d4d0c8;border-top:1px solid #d4d0c8;border-left:1px solid #d4d0c8;border-right:1px solid #404040;border-bottom:1px solid #404040;box-sizing:border-box;box-shadow:inset 1px 1px #fff,inset -1px -1px #808080"></div>
<svg style="position:absolute;left:1361.6px;top:346.6px" width="13.6" height="12.7"><path d="M3.3 4.85 H10.3 L6.8 8.35 Z" fill="#fff" transform="translate(1,1)"/><path d="M3.3 4.85 H10.3 L6.8 8.35 Z" fill="#a0a0a0"/></svg>
<div style="left:566.4px;top:373.2px;width:694.4px;height:1px;background:#808080"></div>
<div style="left:567.4px;top:374.2px;width:693.4px;height:1px;background:#fff"></div>
<div style="left:566.4px;top:373.2px;width:1px;height:76.4px;background:#808080"></div>
<div style="left:567.4px;top:374.2px;width:1px;height:75.4px;background:#fff"></div>
<div style="left:566.4px;top:448.6px;width:694.4px;height:1px;background:#808080"></div>
<div style="left:566.4px;top:449.6px;width:695.4px;height:1px;background:#fff"></div>
<div style="left:1259.8px;top:373.2px;width:1px;height:76.4px;background:#808080"></div>
<div style="left:1260.8px;top:373.2px;width:1px;height:77.4px;background:#fff"></div>
<div style="left:572px;top:366px;width:178px;height:14px;background:#d4d0c8"></div>
<div class="t" style="left:574px;top:366.80px;font-size:13px;line-height:13px;color:#000;font-weight:bold;letter-spacing:0.7px">Requested Work:</div>
<div style="left:691px;top:373.2px;width:45px;height:1px;background:#808080"></div>
<div style="left:691px;top:374.2px;width:45px;height:1px;background:#fff"></div>
<div style="left:733px;top:370px;width:20px;height:6px;background:#d4d0c8"></div>
<div class="t" style="left:736.7px;top:368.19px;font-size:11px;line-height:11px;color:#e02020;">*</div>
<div style="left:580.3px;top:386.6px;width:653px;height:58.7px;background:#fff;border:1px solid #202020;box-sizing:border-box"></div>
<div style="left:1233px;top:386.6px;width:15px;height:58.7px;background:repeating-conic-gradient(#fff 0 25%, #d4d0c8 0 50%) 0 0/2px 2px"></div>
<div style="left:1233.5px;top:431.4px;width:14px;height:13.9px;background:#d4d0c8;border-top:1px solid #d4d0c8;border-left:1px solid #d4d0c8;border-right:1px solid #404040;border-bottom:1px solid #404040;box-sizing:border-box;box-shadow:inset 1px 1px #fff,inset -1px -1px #808080"></div>
<svg style="position:absolute;left:1233.5px;top:431.4px" width="14" height="13.9"><path d="M3.5 5.45 H10.5 L7.0 8.95 Z" fill="#fff" transform="translate(1,1)"/><path d="M3.5 5.45 H10.5 L7.0 8.95 Z" fill="#a0a0a0"/></svg>
<div class="t" style="left:574px;top:450.80px;font-size:13px;line-height:13px;color:#000;font-weight:bold;letter-spacing:0.7px">Note:</div>
<div style="left:566.4px;top:463.3px;width:682px;height:47.3px;background:#fff;border:1px solid #202020;box-sizing:border-box"></div>
<div style="left:1248px;top:463.3px;width:14px;height:47.3px;background:repeating-conic-gradient(#fff 0 25%, #d4d0c8 0 50%) 0 0/2px 2px"></div>
<div style="left:1248px;top:463.4px;width:14px;height:12.8px;background:#d4d0c8;border-top:1px solid #d4d0c8;border-left:1px solid #d4d0c8;border-right:1px solid #404040;border-bottom:1px solid #404040;box-sizing:border-box;box-shadow:inset 1px 1px #fff,inset -1px -1px #808080"></div>
<svg style="position:absolute;left:1248px;top:463.4px" width="14" height="12.8"><path d="M3.5 7.9 H10.5 L7.0 4.4 Z" fill="#fff" transform="translate(1,1)"/><path d="M3.5 7.9 H10.5 L7.0 4.4 Z" fill="#a0a0a0"/></svg>
<div style="left:1248px;top:497.6px;width:14px;height:12.8px;background:#d4d0c8;border-top:1px solid #d4d0c8;border-left:1px solid #d4d0c8;border-right:1px solid #404040;border-bottom:1px solid #404040;box-sizing:border-box;box-shadow:inset 1px 1px #fff,inset -1px -1px #808080"></div>
<svg style="position:absolute;left:1248px;top:497.6px" width="14" height="12.8"><path d="M3.5 4.9 H10.5 L7.0 8.4 Z" fill="#fff" transform="translate(1,1)"/><path d="M3.5 4.9 H10.5 L7.0 8.4 Z" fill="#a0a0a0"/></svg>
<div style="left:1274.4px;top:373.2px;width:11.2px;height:11.2px;background:#fff;border-top:1px solid #6a6a6a;border-left:1px solid #6a6a6a;border-right:1px solid #fff;border-bottom:1px solid #fff;box-sizing:border-box;box-shadow:inset 1px 1px #b8b4ac"></div>
<div class="t" style="left:1291.9px;top:372.39px;font-size:12.3px;line-height:12.3px;color:#303030;">Received</div>
<div style="left:1274.4px;top:390.875px;width:11.2px;height:11.2px;background:#fff;border-top:1px solid #6a6a6a;border-left:1px solid #6a6a6a;border-right:1px solid #fff;border-bottom:1px solid #fff;box-sizing:border-box;box-shadow:inset 1px 1px #b8b4ac"></div>
<div class="t" style="left:1291.9px;top:390.06px;font-size:12.3px;line-height:12.3px;color:#303030;">Disassembly</div>
<div style="left:1274.4px;top:408.55px;width:11.2px;height:11.2px;background:#fff;border-top:1px solid #6a6a6a;border-left:1px solid #6a6a6a;border-right:1px solid #fff;border-bottom:1px solid #fff;box-sizing:border-box;box-shadow:inset 1px 1px #b8b4ac"></div>
<div class="t" style="left:1291.9px;top:407.74px;font-size:12.3px;line-height:12.3px;color:#303030;">Cleaning</div>
<div style="left:1274.4px;top:426.225px;width:11.2px;height:11.2px;background:#fff;border-top:1px solid #6a6a6a;border-left:1px solid #6a6a6a;border-right:1px solid #fff;border-bottom:1px solid #fff;box-sizing:border-box;box-shadow:inset 1px 1px #b8b4ac"></div>
<div class="t" style="left:1291.9px;top:425.41px;font-size:12.3px;line-height:12.3px;color:#303030;">Paint Removal</div>
<div style="left:1274.4px;top:443.9px;width:11.2px;height:11.2px;background:#fff;border-top:1px solid #6a6a6a;border-left:1px solid #6a6a6a;border-right:1px solid #fff;border-bottom:1px solid #fff;box-sizing:border-box;box-shadow:inset 1px 1px #b8b4ac"></div>
<div class="t" style="left:1291.9px;top:443.09px;font-size:12.3px;line-height:12.3px;color:#303030;">Inspection</div>
<div style="left:1274.4px;top:461.575px;width:11.2px;height:11.2px;background:#fff;border-top:1px solid #6a6a6a;border-left:1px solid #6a6a6a;border-right:1px solid #fff;border-bottom:1px solid #fff;box-sizing:border-box;box-shadow:inset 1px 1px #b8b4ac"></div>
<div class="t" style="left:1291.9px;top:460.76px;font-size:12.3px;line-height:12.3px;color:#303030;">NDT</div>
<div style="left:1274.4px;top:479.25px;width:11.2px;height:11.2px;background:#fff;border-top:1px solid #6a6a6a;border-left:1px solid #6a6a6a;border-right:1px solid #fff;border-bottom:1px solid #fff;box-sizing:border-box;box-shadow:inset 1px 1px #b8b4ac"></div>
<div class="t" style="left:1291.9px;top:478.44px;font-size:12.3px;line-height:12.3px;color:#303030;">Repair</div>
<div style="left:1274.4px;top:496.925px;width:11.2px;height:11.2px;background:#fff;border-top:1px solid #6a6a6a;border-left:1px solid #6a6a6a;border-right:1px solid #fff;border-bottom:1px solid #fff;box-sizing:border-box;box-shadow:inset 1px 1px #b8b4ac"></div>
<div class="t" style="left:1291.9px;top:496.11px;font-size:12.3px;line-height:12.3px;color:#303030;">Painting</div>
<div style="left:1274.4px;top:514.6px;width:11.2px;height:11.2px;background:#fff;border-top:1px solid #6a6a6a;border-left:1px solid #6a6a6a;border-right:1px solid #fff;border-bottom:1px solid #fff;box-sizing:border-box;box-shadow:inset 1px 1px #b8b4ac"></div>
<div class="t" style="left:1291.9px;top:513.79px;font-size:12.3px;line-height:12.3px;color:#303030;">Assembly</div>
<div style="left:566.4px;top:521.5px;width:10.5px;height:10.5px;background:#fff;border-top:1px solid #6a6a6a;border-left:1px solid #6a6a6a;border-right:1px solid #fff;border-bottom:1px solid #fff;box-sizing:border-box;box-shadow:inset 1px 1px #b8b4ac"></div>
<svg style="position:absolute;left:566.4px;top:521.5px" width="10.5" height="10.5"><path d="M2.5 5 L4.5 7.5 L8.5 3" stroke="#000" stroke-width="1.6" fill="none"/></svg>
<div class="t" style="left:582.8px;top:519.05px;font-size:14px;line-height:14px;color:#000;font-weight:bold;">Strip Down</div>
<div style="left:693.7px;top:521.5px;width:10.5px;height:10.5px;background:#fff;border-top:1px solid #6a6a6a;border-left:1px solid #6a6a6a;border-right:1px solid #fff;border-bottom:1px solid #fff;box-sizing:border-box;box-shadow:inset 1px 1px #b8b4ac"></div>
<div class="t" style="left:710.6px;top:519.05px;font-size:14px;line-height:14px;color:#8b1010;font-weight:bold;">On Hold</div>
<div style="left:566.6px;top:547.3px;width:10.3px;height:10.3px;background:#fff;border-top:1px solid #6a6a6a;border-left:1px solid #6a6a6a;border-right:1px solid #fff;border-bottom:1px solid #fff;box-sizing:border-box;box-shadow:inset 1px 1px #b8b4ac"></div>
<div class="t" style="left:585px;top:542.34px;font-size:18.5px;line-height:18.5px;color:#8b1010;font-weight:bold;">AOG</div>
<div style="left:646.7px;top:546px;width:10.6px;height:10.6px;background:#fff;border-top:1px solid #6a6a6a;border-left:1px solid #6a6a6a;border-right:1px solid #fff;border-bottom:1px solid #fff;box-sizing:border-box;box-shadow:inset 1px 1px #b8b4ac"></div>
<div class="t" style="left:663.3px;top:544.35px;font-size:14px;line-height:14px;color:#6a1010;font-weight:bold;">Urgent</div>
<div style="left:731.4px;top:546px;width:10.6px;height:10.6px;background:#fff;border-top:1px solid #6a6a6a;border-left:1px solid #6a6a6a;border-right:1px solid #fff;border-bottom:1px solid #fff;box-sizing:border-box;box-shadow:inset 1px 1px #b8b4ac"></div>
<svg style="position:absolute;left:731.4px;top:546px" width="10.6" height="10.6"><path d="M2.5 5 L4.5 7.5 L8.5 3" stroke="#000" stroke-width="1.6" fill="none"/></svg>
<div class="t" style="left:748.4px;top:544.35px;font-size:14px;line-height:14px;color:#000;font-weight:bold;">Routine</div>
<div class="t" style="left:825px;top:520.07px;font-size:13.5px;line-height:13.5px;color:#3c3c3c;">DeadLine:</div>
<div class="t" style="left:900.8px;top:520.69px;font-size:11px;line-height:11px;color:#e02020;">*</div>
<div style="left:827.8px;top:534.3px;width:129px;height:25.4px;background:#fff;border:1px solid #202020;box-sizing:border-box"></div>
<div style="left:920.2px;top:512.8px;width:37px;height:24px;background:#c8c8f8;border-top:1px solid #fff;border-left:1px solid #fff;border-right:1px solid #404040;border-bottom:1px solid #404040;box-sizing:border-box;box-shadow:inset -1px -1px #8080a0"></div>
<svg style="position:absolute;left:931.5px;top:518px" width="15" height="14" viewBox="0 0 15 14"><rect x="0.5" y="0.5" width="14" height="13" fill="#fff" stroke="#202020"/><rect x="0.5" y="0.5" width="14" height="3" fill="#2030a0"/><g fill="#c04040"><rect x="2" y="5" width="2" height="2"/><rect x="5" y="5" width="2" height="2"/><rect x="8" y="5" width="2" height="2"/><rect x="11" y="5" width="2" height="2"/><rect x="2" y="8" width="2" height="2"/><rect x="8" y="8" width="2" height="2"/><rect x="5" y="11" width="2" height="1.5"/><rect x="11" y="11" width="2" height="1.5"/></g><g fill="#606060"><rect x="5" y="8" width="2" height="2"/><rect x="11" y="8" width="2" height="2"/><rect x="2" y="11" width="2" height="1.5"/><rect x="8" y="11" width="2" height="1.5"/></g></svg>
<div class="t" style="left:962.5px;top:520.07px;font-size:13.5px;line-height:13.5px;color:#3c3c3c;">Originator:</div>
<div class="t" style="left:1044.8px;top:519.19px;font-size:11px;line-height:11px;color:#e02020;">*</div>
<div class="t" style="left:1198px;top:520.07px;font-size:13.5px;line-height:13.5px;color:#3c3c3c;">Name:</div>
<div style="left:960px;top:535px;width:70.7px;height:21.2px;background:#fff;border-top:1px solid #808080;border-left:1px solid #808080;border-right:1px solid #d4d0c8;border-bottom:1px solid #d4d0c8;box-sizing:border-box;box-shadow:inset 1px 1px #404040"></div>
<div style="left:1030.7px;top:535px;width:1px;height:22.2px;background:#fff"></div>
<div style="left:960px;top:556.2px;width:71.7px;height:1px;background:#fff"></div>
<div style="left:1014.7px;top:537px;width:14px;height:17.2px;background:#d4d0c8;border-top:1px solid #d4d0c8;border-left:1px solid #d4d0c8;border-right:1px solid #404040;border-bottom:1px solid #404040;box-sizing:border-box;box-shadow:inset 1px 1px #fff,inset -1px -1px #808080"></div>
<svg style="position:absolute;left:1014.7px;top:537px" width="14" height="17.2"><path d="M3.5 7.100000000000023 H10.5 L7.0 10.600000000000023 Z" fill="#000"/></svg>
<div style="left:1033px;top:534.5px;width:357px;height:25px;background:#e6e2e6;border:1px solid #383838;box-sizing:border-box"></div>
<div style="left:552.5px;top:573.9px;width:396px;height:1px;background:#808080"></div>
<div style="left:553.5px;top:574.9px;width:395px;height:1px;background:#fff"></div>
<div style="left:552.5px;top:573.9px;width:1px;height:150.3px;background:#808080"></div>
<div style="left:553.5px;top:574.9px;width:1px;height:149.3px;background:#fff"></div>
<div style="left:552.5px;top:723.2px;width:396px;height:1px;background:#808080"></div>
<div style="left:552.5px;top:724.2px;width:397px;height:1px;background:#fff"></div>
<div style="left:947.5px;top:573.9px;width:1px;height:150.3px;background:#808080"></div>
<div style="left:948.5px;top:573.9px;width:1px;height:151.3px;background:#fff"></div>
<div style="left:557px;top:565px;width:230px;height:14px;background:#d4d0c8"></div>
<div class="t" style="left:559.7px;top:567.42px;font-size:12.5px;line-height:12.5px;color:#10105a;font-weight:bold;letter-spacing:0.25px">Spare Parts Required for Treatment:</div>
<div style="left:567.1px;top:588.8px;width:368px;height:125px;background:#817e81;border-top:1px solid #404040;border-left:1px solid #404040;border-right:1.5px solid #fff;border-bottom:1.5px solid #fff;box-sizing:border-box"></div>
<div style="left:567.6px;top:589.5px;width:237.4px;height:17px;background:#d4d0c8;border-top:1px solid #fff;border-left:1px solid #fff;border-right:1px solid #202020;border-bottom:1px solid #202020;box-sizing:border-box"></div>
<div class="t" style="left:571.2px;top:592.12px;font-size:12.5px;line-height:12.5px;color:#303030;">No Selection !</div>
<div style="left:948.5px;top:573.9px;width:440px;height:1px;background:#808080"></div>
<div style="left:949.5px;top:574.9px;width:439px;height:1px;background:#fff"></div>
<div style="left:948.5px;top:573.9px;width:1px;height:150.3px;background:#808080"></div>
<div style="left:949.5px;top:574.9px;width:1px;height:149.3px;background:#fff"></div>
<div style="left:948.5px;top:723.2px;width:440px;height:1px;background:#808080"></div>
<div style="left:948.5px;top:724.2px;width:441px;height:1px;background:#fff"></div>
<div style="left:1387.5px;top:573.9px;width:1px;height:150.3px;background:#808080"></div>
<div style="left:1388.5px;top:573.9px;width:1px;height:151.3px;background:#fff"></div>
<div style="left:954px;top:565px;width:162px;height:14px;background:#d4d0c8"></div>
<div class="t" style="left:956.6px;top:567.42px;font-size:12.5px;line-height:12.5px;color:#10105a;font-weight:bold;letter-spacing:0.25px">CMM Manual Information:</div>
<div style="left:963.6px;top:588.8px;width:409.5px;height:125px;background:#817e81;border-top:1px solid #404040;border-left:1px solid #404040;border-right:1.5px solid #fff;border-bottom:1.5px solid #fff;box-sizing:border-box"></div>
<div style="left:964.1px;top:589.5px;width:238px;height:17px;background:#d4d0c8;border-top:1px solid #fff;border-left:1px solid #fff;border-right:1px solid #202020;border-bottom:1px solid #202020;box-sizing:border-box"></div>
<div class="t" style="left:967.7px;top:592.12px;font-size:12.5px;line-height:12.5px;color:#303030;">No Selection !</div>
<svg style="position:absolute;left:1200px;top:240px" width="160" height="200" viewBox="1200 240 160 200"><path d="M1336.5 247 L1340 247 L1266 404 L1228 385 Z" fill="#0d98f0"/><circle cx="1243" cy="400.5" r="22.5" fill="#0d98f0" stroke="#fff" stroke-width="1.5"/><circle cx="1243" cy="400.5" r="23.5" fill="none" stroke="#202020" stroke-width="1"/><text x="1243.5" y="407.6" font-family="Liberation Sans" font-weight="bold" font-size="17.5" fill="#fff" text-anchor="middle" letter-spacing="0.8">14</text></svg>
</body></html>
